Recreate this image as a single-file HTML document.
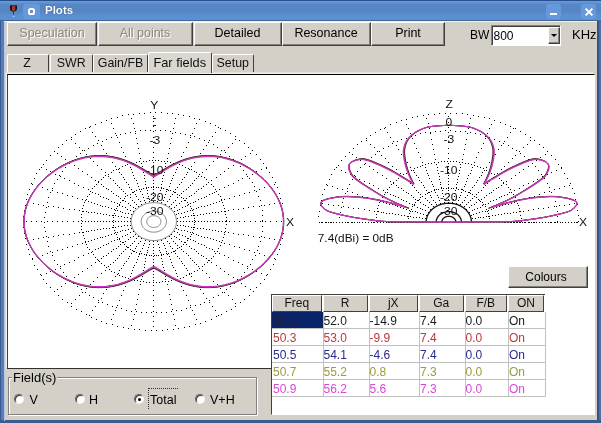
<!DOCTYPE html>
<html><head><meta charset="utf-8"><title>Plots</title>
<style>
html,body{margin:0;padding:0;}
body{width:601px;height:423px;overflow:hidden;background:#d4d0c8;font-family:"Liberation Sans",sans-serif;font-size:13px;color:#000;position:relative;will-change:transform}
.abs{position:absolute}
#frame{position:absolute;left:0;top:0;width:601px;height:423px;background:#527ec0;}
#title{position:absolute;left:0;top:0;width:601px;height:21px;background:linear-gradient(#224c8a 0,#2c5692 1px,#6a9ad8 1.2px,#6294d4 2.5px,#5686c4 4.5px,#5585c2 11px,#5a8fd0 15px,#5a91d3 19.8px,#41669a 20px,#41669a 21px);}
#client{position:absolute;left:4px;top:21px;width:593.2px;height:399.4px;background:#d4d0c8;border-top:1px solid #f4f2ec;box-sizing:border-box}
.tbtn{position:absolute;top:4px;width:15px;height:15px;border-radius:3px;background:#6698dc;}
.ttl{position:absolute;left:45px;top:2px;font-weight:bold;font-size:11.5px;color:#fff;line-height:16px;text-shadow:0 0 1px #234}
.btn{position:absolute;top:22px;height:24px;box-sizing:border-box;background:#d4d0c8;border:1px solid;border-color:#fff #404040 #404040 #fff;box-shadow:inset -1px -1px 0 #808080;text-align:center;line-height:21px;font-size:12.5px;color:#000}
.btn.dis{color:#8a8780;text-shadow:1px 1px 0 #fff}
.tab{position:absolute;top:54px;height:18px;box-sizing:border-box;border-top:1px solid #fff;border-left:1px solid #fff;border-right:1.5px solid #404040;text-align:center;font-size:12.4px;line-height:17px;color:#111;border-radius:2px 2px 0 0;background:#d4d0c8}
.tab.sel{top:52px;height:21px;line-height:19px;z-index:3;font-size:12.8px;background:#dad7d0}
#panel{position:absolute;left:6.5px;top:74.1px;width:588.7px;height:295.4px;box-shadow:-1.3px -1.5px 0 #f2f0ea;box-sizing:border-box;background:#fff;border:1px solid;border-color:#000 #fff #404040 #404040;border-top:1.5px solid #000;border-left:1.5px solid #404040;border-bottom:1.5px solid #303030}
#grid{position:absolute;left:270.6px;top:294px;width:324.4px;height:120.5px;box-sizing:border-box;background:#fff;border:1px solid;border-color:#fff #fff #fff #404040}
.th{position:absolute;box-sizing:border-box;background:#d4d0c8;border:1px solid;border-color:#fff #404040 #404040 #fff;text-align:center;font-size:12px;line-height:15px;color:#111}
.td{position:absolute;box-sizing:border-box;font-size:12px;padding-left:1px;border-right:1px solid #c0c0c0;border-bottom:1px solid #c0c0c0;box-sizing:content-box}
.lbl{position:absolute;font-size:12.5px;line-height:14px;white-space:nowrap}
.radio{position:absolute;width:10px;height:10px;border-radius:50%;box-sizing:border-box;background:#fff;border:1px solid;border-color:#606060 #f4f4f4 #f4f4f4 #606060;box-shadow:inset 1px 1px 0 #404040}
.radio.on::after{content:"";position:absolute;left:2.5px;top:2.5px;width:3.5px;height:3.5px;border-radius:50%;background:#000}
</style></head><body>
<div id="frame"></div><div class="abs" style="left:597.2px;top:21px;width:1.8px;height:402px;background:#36547f"></div><div class="abs" style="left:599px;top:21px;width:2px;height:402px;background:#4b73aa"></div><div class="abs" style="left:0;top:420.4px;width:601px;height:2.6px;background:#3b5c8e"></div><div class="abs" style="left:0;top:21px;width:1.2px;height:402px;background:#3a5a90"></div>
<div id="title"></div>
<svg class="abs" style="left:9px;top:4px" width="10" height="15" viewBox="0 0 10 15"><path d="M1,1.2 H8 V4.5 Q8,7.2 4.5,7.8 Q1,7.2 1,4.5 Z" fill="#1a1016"/><path d="M3,1.8 H6.3 V5.5 Q5.6,7 4.5,7.2 Q3.4,7 3,5.5 Z" fill="#a8382a"/><path d="M4.1,7.8 H4.9 V10.6 H4.1Z" fill="#1c2840"/><path d="M3.6,11.8 H5.4 V13.2 H3.6Z" fill="#a4c2f0"/></svg>
<div class="tbtn" style="left:23.3px;top:3.5px;width:16.5px;height:15px"></div>
<div class="abs" style="left:28px;top:7.8px;width:3px;height:3.4px;border:2px solid #fff;border-radius:2.6px;background:#6f8cba"></div>
<div class="ttl">Plots</div>
<div class="tbtn" style="left:545.5px"></div>
<div class="abs" style="left:550px;top:13.2px;width:7px;height:1.6px;background:#fff"></div>
<div class="tbtn" style="left:580.5px"></div>
<svg class="abs" style="left:583.5px;top:6.5px" width="10" height="10" viewBox="0 0 10 10"><path d="M1.6,1.6 L8.4,8.4 M8.4,1.6 L1.6,8.4" stroke="#fff" stroke-width="2" fill="none"/></svg>
<div id="client"></div><div class="abs" style="left:3.7px;top:21.5px;width:1px;height:399px;background:#b9c6dc"></div>

<div class="btn dis" style="left:7px;width:90px">Speculation</div>
<div class="btn dis" style="left:97.5px;width:95px">All points</div>
<div class="btn" style="left:193.5px;width:88px">Detailed</div>
<div class="btn" style="left:281.5px;width:89px">Resonance</div>
<div class="btn" style="left:371px;width:74px">Print</div>
<div class="lbl" style="left:470px;top:28px;font-size:12px">BW</div>
<div class="abs" style="left:491px;top:25px;width:70px;height:21px;box-sizing:border-box;background:#fff;border:1px solid;border-color:#808080 #fff #fff #808080;box-shadow:inset 1px 1px 0 #404040"></div>
<div class="lbl" style="left:493.5px;top:29px;font-size:12px">800</div>
<div class="abs" style="left:547.5px;top:27px;width:12px;height:17px;box-sizing:border-box;background:#d4d0c8;border:1px solid;border-color:#fff #404040 #404040 #fff;box-shadow:inset -1px -1px 0 #808080"></div>
<div class="abs" style="left:550.5px;top:34px;width:0;height:0;border-left:3px solid transparent;border-right:3px solid transparent;border-top:3px solid #000"></div>
<div class="lbl" style="left:572px;top:28px;font-size:13px">KHz</div>

<div class="tab" style="left:7px;width:42px;text-indent:-2px">Z</div>
<div class="tab" style="left:50px;width:42.5px">SWR</div>
<div class="tab" style="left:93px;width:55px">Gain/FB</div>
<div class="tab sel" style="left:148px;width:63.5px">Far fields</div>
<div class="tab" style="left:211.5px;width:42.5px">Setup</div>

<div id="panel"></div>
<div id="grid"></div>
<svg width="601" height="423" viewBox="0 0 601 423" style="position:absolute;left:0;top:0">
<style>.dt{fill:none;stroke:#000;stroke-width:1;shape-rendering:crispEdges}.sol{fill:none;stroke:#808080;stroke-width:1}.solb{fill:none;stroke:#111;stroke-width:1.3}.cv{fill:none}text{font-family:"Liberation Sans",sans-serif;font-size:10.8px;fill:#111}</style>
<path d="M176.44,221.6 L176.38,220.28 L176.22,218.96 L175.94,217.66 L175.56,216.38 L175.07,215.12 L174.48,213.89 L173.79,212.71 L173,211.56 L172.11,210.46 L171.14,209.42 L170.08,208.44 L168.95,207.52 L167.74,206.67 L166.46,205.89 L165.12,205.19 L163.72,204.57 L162.28,204.04 L160.79,203.58 L159.28,203.22 L157.73,202.94 L156.17,202.76 L154.59,202.67 L153.01,202.67 L151.43,202.76 L149.87,202.94 L148.32,203.22 L146.81,203.58 L145.32,204.04 L143.88,204.57 L142.48,205.19 L141.14,205.89 L139.86,206.67 L138.65,207.52 L137.52,208.44 L136.46,209.42 L135.49,210.46 L134.6,211.56 L133.81,212.71 L133.12,213.89 L132.53,215.12 L132.04,216.38 L131.66,217.66 L131.38,218.96 L131.22,220.28 L131.16,221.6 L131.22,222.92 L131.38,224.24 L131.66,225.54 L132.04,226.82 L132.53,228.08 L133.12,229.31 L133.81,230.49 L134.6,231.64 L135.49,232.74 L136.46,233.78 L137.52,234.76 L138.65,235.68 L139.86,236.53 L141.14,237.31 L142.48,238.01 L143.88,238.63 L145.32,239.16 L146.81,239.62 L148.32,239.98 L149.87,240.26 L151.43,240.44 L153.01,240.53 L154.59,240.53 L156.17,240.44 L157.73,240.26 L159.28,239.98 L160.79,239.62 L162.28,239.16 L163.72,238.63 L165.12,238.01 L166.46,237.31 L167.74,236.53 L168.95,235.68 L170.08,234.76 L171.14,233.78 L172.11,232.74 L173,231.64 L173.79,230.49 L174.48,229.31 L175.07,228.08 L175.56,226.82 L175.94,225.54 L176.22,224.24 L176.38,222.92 L176.44,221.6" class="sol"/>
<path d="M166.44,221.6 L166.41,220.86 L166.32,220.13 L166.16,219.4 L165.95,218.68 L165.68,217.98 L165.35,217.3 L164.96,216.63 L164.52,215.99 L164.03,215.38 L163.48,214.8 L162.89,214.25 L162.26,213.74 L161.58,213.26 L160.87,212.83 L160.12,212.44 L159.34,212.09 L158.53,211.79 L157.71,211.54 L156.86,211.34 L155.99,211.18 L155.12,211.08 L154.24,211.03 L153.36,211.03 L152.48,211.08 L151.61,211.18 L150.74,211.34 L149.89,211.54 L149.07,211.79 L148.26,212.09 L147.48,212.44 L146.73,212.83 L146.02,213.26 L145.34,213.74 L144.71,214.25 L144.12,214.8 L143.57,215.38 L143.08,215.99 L142.64,216.63 L142.25,217.3 L141.92,217.98 L141.65,218.68 L141.44,219.4 L141.28,220.13 L141.19,220.86 L141.16,221.6 L141.19,222.34 L141.28,223.07 L141.44,223.8 L141.65,224.52 L141.92,225.22 L142.25,225.9 L142.64,226.57 L143.08,227.21 L143.57,227.82 L144.12,228.4 L144.71,228.95 L145.34,229.46 L146.02,229.94 L146.73,230.37 L147.48,230.76 L148.26,231.11 L149.07,231.41 L149.89,231.66 L150.74,231.86 L151.61,232.02 L152.48,232.12 L153.36,232.17 L154.24,232.17 L155.12,232.12 L155.99,232.02 L156.86,231.86 L157.71,231.66 L158.53,231.41 L159.34,231.11 L160.12,230.76 L160.87,230.37 L161.58,229.94 L162.26,229.46 L162.89,228.95 L163.48,228.4 L164.03,227.82 L164.52,227.21 L164.96,226.57 L165.35,225.9 L165.68,225.22 L165.95,224.52 L166.16,223.8 L166.32,223.07 L166.41,222.34 L166.44,221.6" class="sol"/>
<path d="M160.86,221.6 L160.84,221.19 L160.79,220.78 L160.7,220.37 L160.58,219.97 L160.43,219.58 L160.25,219.2 L160.03,218.83 L159.79,218.47 L159.51,218.13 L159.21,217.8 L158.88,217.5 L158.52,217.21 L158.15,216.95 L157.75,216.7 L157.33,216.48 L156.89,216.29 L156.44,216.12 L155.98,215.98 L155.51,215.87 L155.03,215.78 L154.54,215.73 L154.05,215.7 L153.55,215.7 L153.06,215.73 L152.57,215.78 L152.09,215.87 L151.62,215.98 L151.16,216.12 L150.71,216.29 L150.27,216.48 L149.85,216.7 L149.45,216.95 L149.08,217.21 L148.72,217.5 L148.39,217.8 L148.09,218.13 L147.81,218.47 L147.57,218.83 L147.35,219.2 L147.17,219.58 L147.02,219.97 L146.9,220.37 L146.81,220.78 L146.76,221.19 L146.74,221.6 L146.76,222.01 L146.81,222.42 L146.9,222.83 L147.02,223.23 L147.17,223.62 L147.35,224 L147.57,224.37 L147.81,224.73 L148.09,225.07 L148.39,225.4 L148.72,225.7 L149.08,225.99 L149.45,226.25 L149.85,226.5 L150.27,226.72 L150.71,226.91 L151.16,227.08 L151.62,227.22 L152.09,227.33 L152.57,227.42 L153.06,227.47 L153.55,227.5 L154.05,227.5 L154.54,227.47 L155.03,227.42 L155.51,227.33 L155.98,227.22 L156.44,227.08 L156.89,226.91 L157.33,226.72 L157.75,226.5 L158.15,226.25 L158.52,225.99 L158.88,225.7 L159.21,225.4 L159.51,225.07 L159.79,224.73 L160.03,224.37 L160.25,224 L160.43,223.62 L160.58,223.23 L160.7,222.83 L160.79,222.42 L160.84,222.01 L160.86,221.6" class="sol"/>
<path d="M283,220h1M283,215h1M282,209h1M282,203h1M280,198h1M279,193h1M277,187h1M275,182h1M272,177h1M269,172h1M266,168h1M263,163h1M260,159h1M256,154h1M252,150h1M248,147h1M244,143h1M239,140h1M235,136h1M230,133h1M225,130h1M220,128h1M215,125h1M210,123h1M205,121h1M199,119h1M194,118h1M189,116h1M183,115h1M178,114h1M172,113h1M167,113h1M161,112h1M155,112h1M150,112h1M144,113h1M139,113h1M133,114h1M128,114h1M122,115h1M117,117h1M111,118h1M106,120h1M101,122h1M95,124h1M90,126h1M85,128h1M80,131h1M75,134h1M71,137h1M66,140h1M62,144h1M58,147h1M54,151h1M50,155h1M46,160h1M43,164h1M39,169h1M36,173h1M34,178h1M31,183h1M29,189h1M27,194h1M26,199h1M25,205h1M24,210h1M23,216h1M23,221h1M23,227h1M24,233h1M25,238h1M26,244h1M28,249h1M29,254h1M32,259h1M34,265h1M37,269h1M40,274h1M43,279h1M46,283h1M50,287h1M54,291h1M58,295h1M62,299h1M67,302h1M71,306h1M76,309h1M81,311h1M86,314h1M91,317h1M96,319h1M101,321h1M106,323h1M112,324h1M117,326h1M123,327h1M128,328h1M134,329h1M139,329h1M145,330h1M151,330h1M156,330h1M162,330h1M167,329h1M173,329h1M178,328h1M184,327h1M189,326h1M195,324h1M200,323h1M205,321h1M211,319h1M216,316h1M221,314h1M226,311h1M231,309h1M235,306h1M240,302h1M244,299h1M249,295h1M253,291h1M256,287h1M260,283h1M264,279h1M267,274h1M270,269h1M273,264h1M275,259h1M277,254h1M279,249h1M280,244h1M282,238h1M283,233h1M283,227h1M283,221h1M262,220h1M262,215h1M262,210h1M261,205h1M260,200h1M258,196h1M256,191h1M254,186h1M252,182h1M249,178h1M246,174h1M243,170h1M240,166h1M237,162h1M233,159h1M229,156h1M225,152h1M221,150h1M217,147h1M213,144h1M208,142h1M204,140h1M199,138h1M194,136h1M190,135h1M185,134h1M180,133h1M175,132h1M170,131h1M165,130h1M160,130h1M155,130h1M150,130h1M145,130h1M140,130h1M135,131h1M130,132h1M125,133h1M120,134h1M116,135h1M111,137h1M106,139h1M102,141h1M97,143h1M93,145h1M88,148h1M84,150h1M80,153h1M76,156h1M72,160h1M69,163h1M65,167h1M62,171h1M59,175h1M57,179h1M54,183h1M52,188h1M50,192h1M48,197h1M47,202h1M46,207h1M45,212h1M44,217h1M44,222h1M44,227h1M45,231h1M46,236h1M47,241h1M48,246h1M50,251h1M52,255h1M54,260h1M57,264h1M60,268h1M63,272h1M66,276h1M69,280h1M73,283h1M77,286h1M81,289h1M85,292h1M89,295h1M93,297h1M98,300h1M102,302h1M107,304h1M112,306h1M116,307h1M121,308h1M126,310h1M131,311h1M136,311h1M141,312h1M146,312h1M151,312h1M156,312h1M161,312h1M166,312h1M171,311h1M176,310h1M181,310h1M186,308h1M190,307h1M195,305h1M200,304h1M204,302h1M209,300h1M213,297h1M218,295h1M222,292h1M226,289h1M230,286h1M234,283h1M237,279h1M241,276h1M244,272h1M247,268h1M250,264h1M252,259h1M255,255h1M257,250h1M258,246h1M260,241h1M261,236h1M262,231h1M262,226h1M262,221h1M226,220h1M226,217h1M225,214h1M225,211h1M224,208h1M223,205h1M222,202h1M221,199h1M220,196h1M218,194h1M216,191h1M215,189h1M213,186h1M211,184h1M208,182h1M206,179h1M204,177h1M201,176h1M199,174h1M196,172h1M194,171h1M191,169h1M188,168h1M185,167h1M182,165h1M179,164h1M176,163h1M173,163h1M170,162h1M167,161h1M164,161h1M161,161h1M158,160h1M155,160h1M152,160h1M149,160h1M146,161h1M143,161h1M139,161h1M136,162h1M133,163h1M130,163h1M127,164h1M125,165h1M122,166h1M119,168h1M116,169h1M113,170h1M111,172h1M108,174h1M105,175h1M103,177h1M101,179h1M98,181h1M96,184h1M94,186h1M92,188h1M90,191h1M89,194h1M87,196h1M86,199h1M84,202h1M83,205h1M82,208h1M82,211h1M81,214h1M81,217h1M81,220h1M81,223h1M81,226h1M81,229h1M82,232h1M83,235h1M84,238h1M85,241h1M86,244h1M87,247h1M89,249h1M91,252h1M93,254h1M95,257h1M97,259h1M99,261h1M101,263h1M104,265h1M106,267h1M109,269h1M111,271h1M114,272h1M117,274h1M119,275h1M122,276h1M125,277h1M128,278h1M131,279h1M134,280h1M137,280h1M140,281h1M143,281h1M146,282h1M149,282h1M153,282h1M156,282h1M159,282h1M162,281h1M165,281h1M168,281h1M171,280h1M174,279h1M177,279h1M180,278h1M183,277h1M186,275h1M189,274h1M191,273h1M194,271h1M197,270h1M199,268h1M202,266h1M204,264h1M207,262h1M209,260h1M211,258h1M213,256h1M215,253h1M217,251h1M218,248h1M220,245h1M221,242h1M222,240h1M223,237h1M224,234h1M225,231h1M225,228h1M226,224h1M226,221h1M194,220h1M194,218h1M193,215h1M193,213h1M192,210h1M191,208h1M190,206h1M188,204h1M187,202h1M185,200h1M183,198h1M181,197h1M179,195h1M177,194h1M175,192h1M173,191h1M170,190h1M168,190h1M166,189h1M163,188h1M161,188h1M158,187h1M156,187h1M153,187h1M151,187h1M148,187h1M146,188h1M143,188h1M141,189h1M139,189h1M136,190h1M134,191h1M132,192h1M130,194h1M127,195h1M125,196h1M124,198h1M122,200h1M120,202h1M119,204h1M117,206h1M116,208h1M115,210h1M114,213h1M113,215h1M113,217h1M113,220h1M113,222h1M113,225h1M113,227h1M114,230h1M115,232h1M116,234h1M117,237h1M119,239h1M120,241h1M122,242h1M124,244h1M126,246h1M128,247h1M130,249h1M132,250h1M134,251h1M136,252h1M139,253h1M141,253h1M144,254h1M146,254h1M149,255h1M151,255h1M154,255h1M156,255h1M158,255h1M161,254h1M163,254h1M166,253h1M168,253h1M171,252h1M173,251h1M175,250h1M177,248h1M179,247h1M181,246h1M183,244h1M185,242h1M187,240h1M188,238h1M190,236h1M191,234h1M192,232h1M193,229h1M193,227h1M194,224h1M194,222h1M177,221h1M180,221h1M183,221h1M186,221h1M189,221h1M192,221h1M195,221h1M198,221h1M201,221h1M204,221h1M207,221h1M210,221h1M213,221h1M216,221h1M219,221h1M222,221h1M225,221h1M229,221h1M234,221h1M239,221h1M244,221h1M250,221h1M255,221h1M260,221h1M265,221h1M270,221h1M276,221h1M281,221h1M177,218h1M180,217h1M183,217h1M185,216h1M188,216h1M191,215h1M194,215h1M197,215h1M200,214h1M203,214h1M206,213h1M209,213h1M212,212h1M215,212h1M218,212h1M221,211h1M224,211h1M228,210h1M233,209h1M238,209h1M243,208h1M248,207h1M253,206h1M259,206h1M264,205h1M269,204h1M274,203h1M279,203h1M176,214h1M178,213h1M181,213h1M184,212h1M187,211h1M190,210h1M193,209h1M196,208h1M198,207h1M201,206h1M204,206h1M207,205h1M210,204h1M213,203h1M216,202h1M219,201h1M221,200h1M224,199h1M229,198h1M234,196h1M239,195h1M244,193h1M249,192h1M254,190h1M259,189h1M264,187h1M269,186h1M274,184h1M174,211h1M177,210h1M179,209h1M182,207h1M185,206h1M187,205h1M190,203h1M193,202h1M195,201h1M198,199h1M201,198h1M204,197h1M206,196h1M209,194h1M212,193h1M214,192h1M219,189h1M224,187h1M228,185h1M233,183h1M238,180h1M242,178h1M247,176h1M252,174h1M256,171h1M261,169h1M266,167h1M171,208h1M174,207h1M176,205h1M179,203h1M181,201h1M184,200h1M186,198h1M189,196h1M191,195h1M194,193h1M196,191h1M198,189h1M201,188h1M203,186h1M206,184h1M211,180h1M216,177h1M220,174h1M224,171h1M228,168h1M233,165h1M241,159h1M245,156h1M250,153h1M169,206h1M171,204h1M173,202h1M175,200h1M177,197h1M181,193h1M183,191h1M186,189h1M188,187h1M190,185h1M192,183h1M194,180h1M196,178h1M198,176h1M202,172h1M206,169h1M209,165h1M213,161h1M217,158h1M220,154h1M224,150h1M228,147h1M232,143h1M235,139h1M165,204h1M167,201h1M169,199h1M170,196h1M172,194h1M174,192h1M175,189h1M177,187h1M179,184h1M181,182h1M182,179h1M184,177h1M186,174h1M187,172h1M189,169h1M191,166h1M194,162h1M197,157h1M200,153h1M203,149h1M206,145h1M209,140h1M212,136h1M215,132h1M218,127h1M161,202h1M163,200h1M164,197h1M165,194h1M166,191h1M167,189h1M169,186h1M170,183h1M171,180h1M172,178h1M173,175h1M175,172h1M176,169h1M177,167h1M179,161h1M181,156h1M183,152h1M186,147h1M188,142h1M190,137h1M192,133h1M194,128h1M196,123h1M157,201h1M158,199h1M159,196h1M159,193h1M160,190h1M161,187h1M161,184h1M162,181h1M162,178h1M163,175h1M164,172h1M164,169h1M165,166h1M165,163h1M167,158h1M168,153h1M169,148h1M170,143h1M171,138h1M172,133h1M173,128h1M174,123h1M175,118h1M153,201h1M153,198h1M153,195h1M153,192h1M153,189h1M153,186h1M153,183h1M153,180h1M153,177h1M153,174h1M153,171h1M153,168h1M153,165h1M153,162h1M153,157h1M153,152h1M153,147h1M153,142h1M153,137h1M153,131h1M153,126h1M153,121h1M153,116h1M149,201h1M149,199h1M148,196h1M147,193h1M147,190h1M146,187h1M145,184h1M145,181h1M144,178h1M144,175h1M143,172h1M142,169h1M142,166h1M141,163h1M140,158h1M139,153h1M138,148h1M137,143h1M136,138h1M135,133h1M134,128h1M133,123h1M131,118h1M145,202h1M144,200h1M143,197h1M142,194h1M140,191h1M138,186h1M137,183h1M136,180h1M134,178h1M133,175h1M132,172h1M131,169h1M130,167h1M127,161h1M125,156h1M123,152h1M121,147h1M119,142h1M117,137h1M115,133h1M113,128h1M111,123h1M141,204h1M140,201h1M138,199h1M136,196h1M135,194h1M133,192h1M131,189h1M129,187h1M128,184h1M126,182h1M124,179h1M123,177h1M121,174h1M119,172h1M118,169h1M115,166h1M112,162h1M109,157h1M106,153h1M103,149h1M101,145h1M98,140h1M95,136h1M92,132h1M89,127h1M138,206h1M136,204h1M134,202h1M132,200h1M130,197h1M125,193h1M123,191h1M121,189h1M119,187h1M117,185h1M115,183h1M113,180h1M110,178h1M108,176h1M105,172h1M101,169h1M97,165h1M93,161h1M90,158h1M86,154h1M82,150h1M79,147h1M75,143h1M71,139h1M135,208h1M133,207h1M130,205h1M128,203h1M125,201h1M123,200h1M120,198h1M118,196h1M116,195h1M113,193h1M111,191h1M108,189h1M106,188h1M103,186h1M101,184h1M98,182h1M95,180h1M91,177h1M87,174h1M82,171h1M78,168h1M74,165h1M70,162h1M65,159h1M61,156h1M57,153h1M133,211h1M130,210h1M127,209h1M125,207h1M122,206h1M119,205h1M117,203h1M114,202h1M111,201h1M108,199h1M106,198h1M103,197h1M100,196h1M98,194h1M95,193h1M92,192h1M88,189h1M83,187h1M78,185h1M74,183h1M69,180h1M64,178h1M60,176h1M55,174h1M50,171h1M46,169h1M41,167h1M131,214h1M128,213h1M125,213h1M122,212h1M120,211h1M117,210h1M114,209h1M111,208h1M108,207h1M105,206h1M102,206h1M100,205h1M97,204h1M94,203h1M91,202h1M88,201h1M85,200h1M82,199h1M77,198h1M72,196h1M67,195h1M62,193h1M57,192h1M52,190h1M47,189h1M42,187h1M37,186h1M32,184h1M130,218h1M127,217h1M124,217h1M121,216h1M118,216h1M115,215h1M112,215h1M109,215h1M106,214h1M103,214h1M100,213h1M97,213h1M94,212h1M91,212h1M88,212h1M86,211h1M83,211h1M79,210h1M74,209h1M69,209h1M63,208h1M58,207h1M53,206h1M48,206h1M43,205h1M38,204h1M33,203h1M27,203h1M130,221h1M127,221h1M124,221h1M121,221h1M118,221h1M115,221h1M112,221h1M109,221h1M106,221h1M103,221h1M100,221h1M97,221h1M94,221h1M91,221h1M88,221h1M85,221h1M82,221h1M78,221h1M73,221h1M67,221h1M62,221h1M57,221h1M52,221h1M47,221h1M41,221h1M36,221h1M31,221h1M26,221h1M130,225h1M127,225h1M124,225h1M121,226h1M118,226h1M115,227h1M112,227h1M109,228h1M106,228h1M103,228h1M100,229h1M97,229h1M94,230h1M91,230h1M88,231h1M86,231h1M83,232h1M79,232h1M74,233h1M69,234h1M63,234h1M58,235h1M53,236h1M48,237h1M43,237h1M38,238h1M33,239h1M27,240h1M131,228h1M128,229h1M125,230h1M122,230h1M120,231h1M117,232h1M114,233h1M111,234h1M108,235h1M105,236h1M102,237h1M100,237h1M97,238h1M94,239h1M91,240h1M88,241h1M85,242h1M82,243h1M77,244h1M72,246h1M67,247h1M62,249h1M57,250h1M52,252h1M47,253h1M42,255h1M37,256h1M32,258h1M133,231h1M130,232h1M127,234h1M125,235h1M122,236h1M119,238h1M117,239h1M114,240h1M111,241h1M108,243h1M106,244h1M103,245h1M100,247h1M98,248h1M95,249h1M92,251h1M88,253h1M83,255h1M78,257h1M74,260h1M69,262h1M64,264h1M60,266h1M55,269h1M50,271h1M46,273h1M41,275h1M135,234h1M133,236h1M130,237h1M128,239h1M125,241h1M123,242h1M120,244h1M118,246h1M116,248h1M113,249h1M111,251h1M108,253h1M106,255h1M103,256h1M101,258h1M98,260h1M95,262h1M91,265h1M87,268h1M82,271h1M78,274h1M74,277h1M70,280h1M65,283h1M61,286h1M57,289h1M138,236h1M136,238h1M134,241h1M132,243h1M130,245h1M127,247h1M125,249h1M123,251h1M121,253h1M119,255h1M117,258h1M115,260h1M113,262h1M110,264h1M108,266h1M105,270h1M101,273h1M97,277h1M93,281h1M90,284h1M86,288h1M82,292h1M79,295h1M75,299h1M71,303h1M141,238h1M140,241h1M138,243h1M136,246h1M135,248h1M133,251h1M131,253h1M129,256h1M128,258h1M126,261h1M124,263h1M123,265h1M121,268h1M119,270h1M118,273h1M115,276h1M112,280h1M109,285h1M106,289h1M103,293h1M101,298h1M98,302h1M95,306h1M92,310h1M89,315h1M145,240h1M144,243h1M143,245h1M142,248h1M140,251h1M139,254h1M138,256h1M137,259h1M136,262h1M134,265h1M133,267h1M132,270h1M131,273h1M130,276h1M127,281h1M125,286h1M123,290h1M121,295h1M119,300h1M117,305h1M115,310h1M113,314h1M111,319h1M149,241h1M149,244h1M148,247h1M147,250h1M147,252h1M146,255h1M145,258h1M145,261h1M144,264h1M144,267h1M143,270h1M142,273h1M142,276h1M141,279h1M140,284h1M139,289h1M138,294h1M137,299h1M136,304h1M135,309h1M134,314h1M133,319h1M131,325h1M153,241h1M153,244h1M153,247h1M153,250h1M153,253h1M153,256h1M153,259h1M153,262h1M153,265h1M153,268h1M153,271h1M153,274h1M153,277h1M153,280h1M153,285h1M153,290h1M153,295h1M153,300h1M153,306h1M153,311h1M153,316h1M153,321h1M153,326h1M157,241h1M158,244h1M159,247h1M159,250h1M160,252h1M161,255h1M161,258h1M162,261h1M162,264h1M163,267h1M164,270h1M164,273h1M165,276h1M165,279h1M167,284h1M168,289h1M169,294h1M170,299h1M171,304h1M172,309h1M173,314h1M174,319h1M175,325h1M161,240h1M163,243h1M164,245h1M165,248h1M166,251h1M167,254h1M169,256h1M170,259h1M171,262h1M172,265h1M173,267h1M175,270h1M176,273h1M177,276h1M179,281h1M181,286h1M183,290h1M186,295h1M188,300h1M190,305h1M192,310h1M194,314h1M196,319h1M165,238h1M167,241h1M169,243h1M170,246h1M172,248h1M174,251h1M175,253h1M177,256h1M179,258h1M181,261h1M182,263h1M184,265h1M186,268h1M187,270h1M189,273h1M191,276h1M194,280h1M197,285h1M200,289h1M203,293h1M206,298h1M209,302h1M212,306h1M215,310h1M218,315h1M169,236h1M171,238h1M173,241h1M175,243h1M177,245h1M181,249h1M183,251h1M186,253h1M188,255h1M190,258h1M192,260h1M194,262h1M196,264h1M198,266h1M202,270h1M206,273h1M209,277h1M213,281h1M217,284h1M220,288h1M224,292h1M228,295h1M232,299h1M235,303h1M171,234h1M174,236h1M176,237h1M179,239h1M181,241h1M184,242h1M186,244h1M189,246h1M191,248h1M194,249h1M196,251h1M198,253h1M201,255h1M203,256h1M206,258h1M208,260h1M211,262h1M216,265h1M220,268h1M224,271h1M228,274h1M233,277h1M237,280h1M241,283h1M245,286h1M250,289h1M174,231h1M177,232h1M179,234h1M182,235h1M185,236h1M187,238h1M190,239h1M193,240h1M195,241h1M198,243h1M201,244h1M204,245h1M206,247h1M209,248h1M212,249h1M214,251h1M219,253h1M224,255h1M228,257h1M233,260h1M238,262h1M242,264h1M247,266h1M252,269h1M256,271h1M261,273h1M266,275h1M176,228h1M178,229h1M181,230h1M184,230h1M187,231h1M190,232h1M193,233h1M196,234h1M198,235h1M201,236h1M204,237h1M207,237h1M210,238h1M213,239h1M216,240h1M219,241h1M224,243h1M229,244h1M234,246h1M239,247h1M244,249h1M249,250h1M254,252h1M259,253h1M264,255h1M269,256h1M274,258h1M177,225h1M180,225h1M183,225h1M185,226h1M188,226h1M191,227h1M194,227h1M197,228h1M200,228h1M203,228h1M206,229h1M209,229h1M212,230h1M215,230h1M218,231h1M221,231h1M224,232h1M228,232h1M233,233h1M238,234h1M243,234h1M248,235h1M253,236h1M259,237h1M264,237h1M269,238h1M274,239h1M279,240h1" transform="translate(0,0.5)" class="dt"/>
<path d="M471.44,222.2 L471.42,221.54 L471.38,220.88 L471.31,220.22 L471.22,219.56 L471.09,218.91 L470.94,218.26 L470.76,217.62 L470.56,216.98 L470.33,216.35 L470.07,215.72 L469.79,215.1 L469.48,214.49 L469.14,213.9 L468.79,213.31 L468.4,212.73 L468,212.16 L467.57,211.61 L467.11,211.06 L466.64,210.54 L466.14,210.02 L465.62,209.52 L465.08,209.04 L464.52,208.57 L463.95,208.12 L463.35,207.69 L462.74,207.27 L462.1,206.87 L461.46,206.49 L460.8,206.13 L460.12,205.79 L459.43,205.47 L458.72,205.17 L458.01,204.89 L457.28,204.64 L456.54,204.4 L455.79,204.18 L455.04,203.99 L454.28,203.82 L453.51,203.67 L452.73,203.54 L451.95,203.44 L451.17,203.36 L450.38,203.3 L449.59,203.27 L448.8,203.26 L448.01,203.27 L447.22,203.3 L446.43,203.36 L445.65,203.44 L444.87,203.54 L444.09,203.67 L443.32,203.82 L442.56,203.99 L441.81,204.18 L441.06,204.4 L440.32,204.64 L439.59,204.89 L438.88,205.17 L438.17,205.47 L437.48,205.79 L436.8,206.13 L436.14,206.49 L435.5,206.87 L434.86,207.27 L434.25,207.69 L433.65,208.12 L433.08,208.57 L432.52,209.04 L431.98,209.52 L431.46,210.02 L430.96,210.54 L430.49,211.06 L430.03,211.61 L429.6,212.16 L429.2,212.73 L428.81,213.31 L428.46,213.9 L428.12,214.49 L427.81,215.1 L427.53,215.72 L427.27,216.35 L427.04,216.98 L426.84,217.62 L426.66,218.26 L426.51,218.91 L426.38,219.56 L426.29,220.22 L426.22,220.88 L426.18,221.54 L426.16,222.2" class="solb"/>
<path d="M461.44,222.2 L461.43,221.83 L461.41,221.46 L461.37,221.09 L461.32,220.73 L461.25,220.36 L461.16,220 L461.06,219.64 L460.95,219.28 L460.82,218.93 L460.68,218.58 L460.52,218.24 L460.35,217.9 L460.16,217.56 L459.96,217.23 L459.75,216.91 L459.52,216.59 L459.28,216.28 L459.03,215.98 L458.76,215.69 L458.48,215.4 L458.19,215.12 L457.89,214.85 L457.58,214.59 L457.26,214.34 L456.92,214.1 L456.58,213.86 L456.23,213.64 L455.87,213.43 L455.5,213.23 L455.12,213.04 L454.73,212.86 L454.34,212.69 L453.94,212.54 L453.53,212.39 L453.12,212.26 L452.71,212.14 L452.28,212.03 L451.86,211.94 L451.43,211.85 L450.99,211.78 L450.56,211.72 L450.12,211.68 L449.68,211.65 L449.24,211.63 L448.8,211.62 L448.36,211.63 L447.92,211.65 L447.48,211.68 L447.04,211.72 L446.61,211.78 L446.17,211.85 L445.74,211.94 L445.32,212.03 L444.89,212.14 L444.48,212.26 L444.07,212.39 L443.66,212.54 L443.26,212.69 L442.87,212.86 L442.48,213.04 L442.1,213.23 L441.73,213.43 L441.37,213.64 L441.02,213.86 L440.68,214.1 L440.34,214.34 L440.02,214.59 L439.71,214.85 L439.41,215.12 L439.12,215.4 L438.84,215.69 L438.57,215.98 L438.32,216.28 L438.08,216.59 L437.85,216.91 L437.64,217.23 L437.44,217.56 L437.25,217.9 L437.08,218.24 L436.92,218.58 L436.78,218.93 L436.65,219.28 L436.54,219.64 L436.44,220 L436.35,220.36 L436.28,220.73 L436.23,221.09 L436.19,221.46 L436.17,221.83 L436.16,222.2" class="solb"/>
<path d="M455.86,222.2 L455.85,221.99 L455.84,221.79 L455.82,221.58 L455.79,221.38 L455.75,221.17 L455.7,220.97 L455.65,220.77 L455.58,220.57 L455.51,220.37 L455.43,220.18 L455.34,219.99 L455.25,219.8 L455.14,219.61 L455.03,219.43 L454.91,219.25 L454.79,219.07 L454.65,218.9 L454.51,218.73 L454.36,218.56 L454.21,218.4 L454.05,218.25 L453.88,218.1 L453.7,217.95 L453.52,217.81 L453.34,217.67 L453.15,217.55 L452.95,217.42 L452.75,217.3 L452.54,217.19 L452.33,217.08 L452.11,216.98 L451.89,216.89 L451.67,216.8 L451.44,216.72 L451.21,216.65 L450.98,216.58 L450.75,216.52 L450.51,216.47 L450.27,216.42 L450.03,216.38 L449.78,216.35 L449.54,216.33 L449.29,216.31 L449.05,216.3 L448.8,216.29 L448.55,216.3 L448.31,216.31 L448.06,216.33 L447.82,216.35 L447.57,216.38 L447.33,216.42 L447.09,216.47 L446.85,216.52 L446.62,216.58 L446.39,216.65 L446.16,216.72 L445.93,216.8 L445.71,216.89 L445.49,216.98 L445.27,217.08 L445.06,217.19 L444.85,217.3 L444.65,217.42 L444.45,217.55 L444.26,217.67 L444.08,217.81 L443.9,217.95 L443.72,218.1 L443.55,218.25 L443.39,218.4 L443.24,218.56 L443.09,218.73 L442.95,218.9 L442.81,219.07 L442.69,219.25 L442.57,219.43 L442.46,219.61 L442.35,219.8 L442.26,219.99 L442.17,220.18 L442.09,220.37 L442.02,220.57 L441.95,220.77 L441.9,220.97 L441.85,221.17 L441.81,221.38 L441.78,221.58 L441.76,221.79 L441.75,221.99 L441.74,222.2" class="solb"/>
<path d="M578,221h1M578,215h1M577,210h1M577,204h1M575,199h1M574,193h1M572,188h1M570,183h1M567,178h1M564,173h1M561,168h1M558,164h1M555,159h1M551,155h1M547,151h1M543,147h1M539,144h1M534,140h1M530,137h1M525,134h1M520,131h1M515,128h1M510,126h1M505,124h1M500,122h1M494,120h1M489,118h1M484,117h1M478,116h1M473,115h1M467,114h1M462,113h1M456,113h1M450,113h1M445,113h1M439,113h1M434,114h1M428,114h1M423,115h1M417,116h1M412,117h1M406,119h1M401,120h1M396,122h1M390,124h1M385,127h1M380,129h1M375,132h1M370,135h1M366,138h1M361,141h1M357,144h1M353,148h1M349,152h1M345,156h1M341,160h1M338,165h1M334,169h1M331,174h1M329,179h1M326,184h1M324,189h1M322,194h1M321,200h1M320,205h1M319,211h1M318,216h1M557,221h1M557,216h1M557,211h1M556,206h1M555,201h1M553,196h1M551,192h1M549,187h1M547,183h1M544,178h1M541,174h1M538,170h1M535,166h1M532,163h1M528,159h1M524,156h1M520,153h1M516,150h1M512,148h1M508,145h1M503,143h1M499,141h1M494,139h1M489,137h1M485,136h1M480,134h1M475,133h1M470,132h1M465,131h1M460,131h1M455,131h1M450,130h1M445,130h1M440,131h1M435,131h1M430,132h1M425,132h1M420,133h1M415,135h1M411,136h1M406,138h1M401,139h1M397,141h1M392,143h1M388,146h1M383,148h1M379,151h1M375,154h1M371,157h1M367,160h1M364,164h1M360,167h1M357,171h1M354,175h1M352,179h1M349,184h1M347,188h1M345,193h1M343,198h1M342,202h1M341,207h1M340,212h1M339,217h1M521,221h1M521,218h1M520,215h1M520,211h1M519,208h1M518,205h1M517,203h1M516,200h1M515,197h1M513,194h1M511,192h1M510,189h1M508,187h1M506,184h1M503,182h1M501,180h1M499,178h1M496,176h1M494,174h1M491,173h1M489,171h1M486,170h1M483,168h1M480,167h1M477,166h1M474,165h1M471,164h1M468,163h1M465,163h1M462,162h1M459,162h1M456,161h1M453,161h1M450,161h1M447,161h1M444,161h1M441,161h1M438,162h1M434,162h1M431,163h1M428,163h1M425,164h1M422,165h1M420,166h1M417,167h1M414,168h1M411,170h1M408,171h1M406,173h1M403,174h1M400,176h1M398,178h1M396,180h1M393,182h1M391,184h1M389,187h1M387,189h1M385,192h1M384,194h1M382,197h1M381,200h1M379,202h1M378,205h1M377,208h1M377,211h1M376,214h1M376,217h1M376,221h1M489,221h1M489,218h1M488,216h1M488,213h1M487,211h1M486,209h1M485,206h1M483,204h1M482,202h1M480,201h1M478,199h1M476,197h1M474,196h1M472,194h1M470,193h1M468,192h1M465,191h1M463,190h1M461,189h1M458,189h1M456,188h1M453,188h1M451,188h1M448,188h1M446,188h1M443,188h1M441,188h1M438,189h1M436,189h1M434,190h1M431,191h1M429,192h1M427,193h1M425,194h1M422,196h1M420,197h1M419,199h1M417,200h1M415,202h1M414,204h1M412,206h1M411,209h1M410,211h1M409,213h1M408,216h1M408,218h1M408,221h1M472,222h1M475,222h1M478,222h1M481,222h1M484,222h1M487,222h1M490,222h1M493,222h1M496,222h1M499,222h1M502,222h1M505,222h1M508,222h1M511,222h1M514,222h1M517,222h1M520,222h1M524,222h1M529,222h1M534,222h1M539,222h1M545,222h1M550,222h1M555,222h1M560,222h1M565,222h1M571,222h1M576,222h1M472,218h1M475,218h1M478,217h1M480,217h1M483,217h1M486,216h1M489,216h1M492,215h1M495,215h1M498,214h1M501,214h1M504,213h1M507,213h1M510,213h1M513,212h1M516,212h1M519,211h1M523,211h1M528,210h1M533,209h1M538,208h1M543,208h1M548,207h1M554,206h1M559,205h1M564,205h1M569,204h1M574,203h1M471,215h1M473,214h1M476,213h1M479,212h1M482,211h1M485,211h1M488,210h1M491,209h1M493,208h1M496,207h1M499,206h1M502,205h1M505,204h1M508,204h1M511,203h1M514,202h1M516,201h1M519,200h1M524,199h1M529,197h1M534,196h1M539,194h1M544,192h1M549,191h1M554,189h1M559,188h1M564,186h1M569,185h1M469,212h1M472,210h1M474,209h1M477,208h1M480,207h1M482,205h1M485,204h1M488,203h1M490,201h1M493,200h1M496,199h1M499,197h1M501,196h1M504,195h1M507,194h1M509,192h1M514,190h1M519,188h1M523,185h1M528,183h1M533,181h1M537,179h1M542,176h1M547,174h1M551,172h1M556,170h1M561,167h1M466,209h1M469,207h1M471,205h1M474,204h1M476,202h1M479,200h1M481,199h1M484,197h1M486,195h1M489,193h1M491,192h1M493,190h1M496,188h1M498,187h1M501,185h1M503,183h1M506,181h1M511,178h1M515,175h1M519,172h1M523,169h1M528,166h1M536,160h1M540,157h1M545,154h1M464,206h1M466,204h1M468,202h1M470,200h1M472,198h1M476,194h1M478,192h1M481,190h1M483,187h1M485,185h1M487,183h1M489,181h1M491,179h1M493,177h1M497,173h1M501,169h1M504,166h1M508,162h1M512,158h1M515,155h1M519,151h1M523,147h1M527,144h1M530,140h1M460,204h1M462,202h1M464,200h1M465,197h1M467,195h1M469,192h1M470,190h1M472,187h1M474,185h1M476,182h1M477,180h1M479,177h1M481,175h1M482,172h1M484,170h1M486,167h1M489,162h1M492,158h1M495,154h1M498,149h1M501,145h1M504,141h1M507,137h1M510,132h1M513,128h1M456,203h1M458,200h1M459,197h1M460,195h1M461,192h1M462,189h1M464,186h1M465,184h1M466,181h1M467,178h1M468,175h1M470,173h1M471,170h1M472,167h1M474,162h1M476,157h1M478,152h1M481,148h1M483,143h1M485,138h1M487,133h1M489,128h1M491,124h1M452,202h1M453,199h1M454,196h1M454,193h1M455,190h1M456,187h1M456,184h1M457,182h1M457,179h1M458,176h1M459,173h1M459,170h1M460,167h1M460,164h1M462,159h1M463,154h1M464,149h1M465,144h1M466,139h1M467,133h1M468,128h1M469,123h1M470,118h1M448,202h1M448,199h1M448,196h1M448,193h1M448,190h1M448,187h1M448,184h1M448,181h1M448,178h1M448,175h1M448,172h1M448,169h1M448,166h1M448,163h1M448,158h1M448,153h1M448,148h1M448,142h1M448,137h1M448,132h1M448,127h1M448,122h1M448,116h1M444,202h1M444,199h1M443,196h1M442,193h1M442,190h1M441,187h1M440,184h1M440,182h1M439,179h1M439,176h1M438,173h1M437,170h1M437,167h1M436,164h1M435,159h1M434,154h1M433,149h1M432,144h1M431,139h1M430,133h1M429,128h1M428,123h1M426,118h1M440,203h1M439,200h1M438,197h1M437,195h1M435,192h1M434,189h1M433,186h1M432,184h1M431,181h1M429,178h1M428,175h1M427,173h1M426,170h1M425,167h1M422,162h1M420,157h1M418,152h1M416,148h1M414,143h1M412,138h1M410,133h1M408,128h1M406,124h1M436,204h1M435,202h1M433,200h1M431,197h1M430,195h1M428,192h1M426,190h1M424,187h1M423,185h1M421,182h1M419,180h1M418,177h1M416,175h1M414,172h1M413,170h1M410,167h1M407,162h1M404,158h1M401,154h1M398,149h1M396,145h1M393,141h1M390,137h1M387,132h1M384,128h1M433,206h1M431,204h1M429,202h1M427,200h1M425,198h1M420,194h1M418,192h1M416,190h1M414,187h1M412,185h1M410,183h1M408,181h1M405,179h1M403,177h1M400,173h1M396,169h1M392,166h1M388,162h1M385,158h1M381,155h1M377,151h1M374,147h1M370,144h1M366,140h1M430,209h1M428,207h1M425,205h1M423,204h1M420,202h1M418,200h1M415,199h1M413,197h1M411,195h1M408,193h1M406,192h1M403,190h1M401,188h1M398,187h1M396,185h1M393,183h1M390,181h1M386,178h1M382,175h1M377,172h1M373,169h1M369,166h1M365,163h1M360,160h1M356,157h1M352,154h1M428,212h1M425,210h1M422,209h1M420,208h1M417,207h1M414,205h1M412,204h1M409,203h1M406,201h1M403,200h1M401,199h1M398,197h1M395,196h1M393,195h1M390,194h1M387,192h1M383,190h1M378,188h1M373,185h1M369,183h1M364,181h1M359,179h1M355,176h1M350,174h1M345,172h1M341,170h1M336,167h1M426,215h1M423,214h1M420,213h1M417,212h1M415,211h1M412,211h1M409,210h1M406,209h1M403,208h1M400,207h1M397,206h1M395,205h1M392,204h1M389,204h1M386,203h1M383,202h1M380,201h1M377,200h1M372,199h1M367,197h1M362,196h1M357,194h1M352,192h1M347,191h1M342,189h1M337,188h1M332,186h1M327,185h1M425,218h1M422,218h1M419,217h1M416,217h1M413,217h1M410,216h1M407,216h1M404,215h1M401,215h1M398,214h1M395,214h1M392,213h1M389,213h1M386,213h1M383,212h1M381,212h1M378,211h1M374,211h1M369,210h1M364,209h1M358,208h1M353,208h1M348,207h1M343,206h1M338,205h1M333,205h1M328,204h1M322,203h1M425,222h1M422,222h1M419,222h1M416,222h1M413,222h1M410,222h1M407,222h1M404,222h1M401,222h1M398,222h1M395,222h1M392,222h1M389,222h1M386,222h1M383,222h1M380,222h1M377,222h1M373,222h1M368,222h1M362,222h1M357,222h1M352,222h1M347,222h1M342,222h1M336,222h1M331,222h1M326,222h1M321,222h1M319,222h1M322,222h1M325,222h1M328,222h1M330,222h1M333,222h1M339,222h1M345,222h1M348,222h1M351,222h1M354,222h1M359,222h1M365,222h1M371,222h1M374,222h1M388,222h1M391,222h1M394,222h1M397,222h1M400,222h1M403,222h1M406,222h1M409,222h1M412,222h1M415,222h1M417,222h1M420,222h1M423,222h1M426,222h1M429,222h1M432,222h1M435,222h1M438,222h1M441,222h1M444,222h1M446,222h1M449,222h1M452,222h1M455,222h1M458,222h1M461,222h1M464,222h1M467,222h1M470,222h1M473,222h1M504,222h1M507,222h1M510,222h1M513,222h1M516,222h1M519,222h1M522,222h1M525,222h1M528,222h1M531,222h1M533,222h1M536,222h1M542,222h1M548,222h1M551,222h1M554,222h1M557,222h1M562,222h1M568,222h1M574,222h1M577,222h1" transform="translate(0,0.5)" class="dt"/>
<path d="M283.49,221.6 L283.34,217.77 L282.89,213.96 L282.15,210.19 L281.12,206.46 L279.82,202.8 L278.26,199.22 L276.45,195.72 L274.41,192.34 L272.17,189.06 L269.73,185.9 L267.11,182.86 L264.34,179.96 L261.42,177.19 L258.36,174.56 L255.19,172.07 L251.91,169.73 L248.52,167.54 L245.04,165.51 L241.47,163.64 L237.81,161.95 L234.08,160.43 L230.28,159.11 L226.41,157.98 L222.49,157.05 L218.52,156.34 L214.51,155.85 L210.49,155.58 L206.46,155.54 L202.44,155.73 L198.46,156.15 L194.53,156.78 L190.69,157.61 L186.94,158.62 L183.31,159.8 L179.81,161.12 L176.47,162.55 L173.3,164.06 L170.3,165.61 L167.47,167.18 L164.82,168.72 L162.34,170.21 L160.01,171.61 L157.83,172.88 L155.76,173.99 L153.8,174.91 L151.84,173.99 L149.77,172.88 L147.59,171.61 L145.26,170.21 L142.78,168.72 L140.13,167.18 L137.3,165.61 L134.3,164.06 L131.13,162.55 L127.79,161.12 L124.29,159.8 L120.66,158.62 L116.91,157.61 L113.07,156.78 L109.14,156.15 L105.16,155.73 L101.14,155.54 L97.11,155.58 L93.09,155.85 L89.08,156.34 L85.11,157.05 L81.19,157.98 L77.32,159.11 L73.52,160.43 L69.79,161.95 L66.13,163.64 L62.56,165.51 L59.08,167.54 L55.69,169.73 L52.41,172.07 L49.24,174.56 L46.18,177.19 L43.26,179.96 L40.49,182.86 L37.87,185.9 L35.43,189.06 L33.19,192.34 L31.15,195.72 L29.34,199.22 L27.78,202.8 L26.48,206.46 L25.45,210.19 L24.71,213.96 L24.26,217.77 L24.11,221.6 L24.26,225.43 L24.71,229.24 L25.45,233.01 L26.48,236.74 L27.78,240.4 L29.34,243.98 L31.15,247.48 L33.19,250.86 L35.43,254.14 L37.87,257.3 L40.49,260.34 L43.26,263.24 L46.18,266.01 L49.24,268.64 L52.41,271.13 L55.69,273.47 L59.08,275.66 L62.56,277.69 L66.13,279.56 L69.79,281.25 L73.52,282.77 L77.32,284.09 L81.19,285.22 L85.11,286.15 L89.08,286.86 L93.09,287.35 L97.11,287.62 L101.14,287.66 L105.16,287.47 L109.14,287.05 L113.07,286.42 L116.91,285.59 L120.66,284.58 L124.29,283.4 L127.79,282.08 L131.13,280.65 L134.3,279.14 L137.3,277.59 L140.13,276.02 L142.78,274.48 L145.26,272.99 L147.59,271.59 L149.77,270.32 L151.84,269.21 L153.8,268.29 L155.76,269.21 L157.83,270.32 L160.01,271.59 L162.34,272.99 L164.82,274.48 L167.47,276.02 L170.3,277.59 L173.3,279.14 L176.47,280.65 L179.81,282.08 L183.31,283.4 L186.94,284.58 L190.69,285.59 L194.53,286.42 L198.46,287.05 L202.44,287.47 L206.46,287.66 L210.49,287.62 L214.51,287.35 L218.52,286.86 L222.49,286.15 L226.41,285.22 L230.28,284.09 L234.08,282.77 L237.81,281.25 L241.47,279.56 L245.04,277.69 L248.52,275.66 L251.91,273.47 L255.19,271.13 L258.36,268.64 L261.42,266.01 L264.34,263.24 L267.11,260.34 L269.73,257.3 L272.17,254.14 L274.41,250.86 L276.45,247.48 L278.26,243.98 L279.82,240.4 L281.12,236.74 L282.15,233.01 L282.89,229.24 L283.34,225.43 L283.49,221.6Z" class="cv" stroke="#000000" stroke-width="0.8"/>
<path d="M448.8,222.2 L507.89,221.76 L517.01,221.19 L521.76,220.58 L526.55,219.9 L532.85,219.09 L538.86,218.21 L544.49,217.25 L549.64,216.23 L554.62,215.15 L559.66,213.99 L564.31,212.79 L568.15,211.59 L570.75,210.44 L572.24,209.38 L573.55,208.3 L574.69,207.23 L575.62,206.16 L576.3,205.11 L576.71,204.09 L576.8,203.1 L576.53,202.17 L575.8,201.31 L574.67,200.53 L573.19,199.83 L571.42,199.2 L569.42,198.64 L567.25,198.14 L564.96,197.69 L562.61,197.29 L560.26,196.93 L557.85,196.61 L555.09,196.41 L551.99,196.33 L548.62,196.38 L545.01,196.53 L541.23,196.79 L537.32,197.14 L533.31,197.58 L529.12,198.13 L524.57,198.86 L519.49,199.84 L513.71,201.12 L506.6,202.94 L497.75,205.47 L488.61,208.25 L495.48,205.43 L501.65,202.75 L506.74,200.37 L510.95,198.23 L514.63,196.23 L517.96,194.29 L521.14,192.35 L524.33,190.33 L527.78,188.15 L531.44,185.8 L535.08,183.38 L538.49,180.99 L541.45,178.74 L543.75,176.75 L545.17,175.12 L545.98,173.76 L546.69,172.43 L547.31,171.12 L547.81,169.85 L548.18,168.63 L548.41,167.46 L548.49,166.37 L548.41,165.35 L548.16,164.42 L547.72,163.59 L547.1,162.87 L546.38,162.21 L545.56,161.62 L544.66,161.08 L543.68,160.6 L542.63,160.17 L541.52,159.8 L540.35,159.47 L539.14,159.19 L537.89,158.94 L536.61,158.74 L535.28,158.59 L533.63,158.69 L531.64,159.08 L529.39,159.72 L526.93,160.55 L524.33,161.55 L521.65,162.67 L518.96,163.86 L516.31,165.08 L513.76,166.27 L511.33,167.41 L508.84,168.67 L506.29,170.04 L503.72,171.48 L501.2,172.96 L498.74,174.43 L496.41,175.86 L494.24,177.19 L492.22,178.42 L490.29,179.61 L488.45,180.76 L486.7,181.88 L485.04,182.95 L483.47,183.97 L484.4,182.23 L485.37,180.39 L486.26,178.58 L487.06,176.82 L487.8,175.08 L488.48,173.34 L489.11,171.63 L489.69,169.92 L490.22,168.24 L490.68,166.57 L491.1,164.92 L491.46,163.29 L491.79,161.66 L492.09,160.01 L492.36,158.36 L492.6,156.69 L492.78,155.06 L492.9,153.47 L492.95,151.94 L492.91,150.5 L492.78,149.16 L492.56,147.93 L492.3,146.74 L491.98,145.59 L491.63,144.48 L491.23,143.41 L490.8,142.39 L490.32,141.41 L489.8,140.47 L489.24,139.59 L488.64,138.75 L488.01,137.97 L487.35,137.22 L486.67,136.49 L485.97,135.79 L485.25,135.11 L484.51,134.45 L483.75,133.83 L482.97,133.23 L482.17,132.66 L481.35,132.12 L480.51,131.62 L479.66,131.15 L478.79,130.71 L477.91,130.27 L477.03,129.85 L476.14,129.43 L475.23,129.03 L474.33,128.65 L473.41,128.28 L472.48,127.95 L471.54,127.63 L470.59,127.35 L469.63,127.11 L468.66,126.9 L467.68,126.73 L466.7,126.59 L465.71,126.46 L464.72,126.34 L463.73,126.23 L462.74,126.12 L461.75,126.02 L460.76,125.93 L459.76,125.85 L458.77,125.77 L457.78,125.7 L456.78,125.64 L455.78,125.58 L454.79,125.53 L453.79,125.49 L452.79,125.46 L451.79,125.43 L450.8,125.41 L449.8,125.4 L448.8,125.4 L447.8,125.4 L446.8,125.41 L445.81,125.43 L444.81,125.46 L443.81,125.49 L442.81,125.53 L441.82,125.58 L440.82,125.64 L439.82,125.7 L438.83,125.77 L437.84,125.85 L436.84,125.93 L435.85,126.02 L434.86,126.12 L433.87,126.23 L432.88,126.34 L431.89,126.46 L430.9,126.59 L429.92,126.73 L428.94,126.9 L427.97,127.11 L427.01,127.35 L426.06,127.63 L425.12,127.95 L424.19,128.28 L423.27,128.65 L422.37,129.03 L421.46,129.43 L420.57,129.85 L419.69,130.27 L418.81,130.71 L417.94,131.15 L417.09,131.62 L416.25,132.12 L415.43,132.66 L414.63,133.23 L413.85,133.83 L413.09,134.45 L412.35,135.11 L411.63,135.79 L410.93,136.49 L410.25,137.22 L409.59,137.97 L408.96,138.75 L408.36,139.59 L407.8,140.47 L407.28,141.41 L406.8,142.39 L406.37,143.41 L405.97,144.48 L405.62,145.59 L405.3,146.74 L405.04,147.93 L404.82,149.16 L404.69,150.5 L404.65,151.94 L404.7,153.47 L404.82,155.06 L405,156.69 L405.24,158.36 L405.51,160.01 L405.81,161.66 L406.14,163.29 L406.5,164.92 L406.92,166.57 L407.38,168.24 L407.91,169.92 L408.49,171.63 L409.12,173.34 L409.8,175.08 L410.54,176.82 L411.34,178.58 L412.23,180.39 L413.2,182.23 L414.13,183.97 L412.56,182.95 L410.9,181.88 L409.15,180.76 L407.31,179.61 L405.38,178.42 L403.36,177.19 L401.19,175.86 L398.86,174.43 L396.4,172.96 L393.88,171.48 L391.31,170.04 L388.76,168.67 L386.27,167.41 L383.84,166.27 L381.29,165.08 L378.64,163.86 L375.95,162.67 L373.27,161.55 L370.67,160.55 L368.21,159.72 L365.96,159.08 L363.97,158.69 L362.32,158.59 L360.99,158.74 L359.71,158.94 L358.46,159.19 L357.25,159.47 L356.08,159.8 L354.97,160.17 L353.92,160.6 L352.94,161.08 L352.04,161.62 L351.22,162.21 L350.5,162.87 L349.88,163.59 L349.44,164.42 L349.19,165.35 L349.11,166.37 L349.19,167.46 L349.42,168.63 L349.79,169.85 L350.29,171.12 L350.91,172.43 L351.62,173.76 L352.43,175.12 L353.85,176.75 L356.15,178.74 L359.11,180.99 L362.52,183.38 L366.16,185.8 L369.82,188.15 L373.27,190.33 L376.46,192.35 L379.64,194.29 L382.97,196.23 L386.65,198.23 L390.86,200.37 L395.95,202.75 L402.12,205.43 L408.99,208.25 L399.85,205.47 L391,202.94 L383.89,201.12 L378.11,199.84 L373.03,198.86 L368.48,198.13 L364.29,197.58 L360.28,197.14 L356.37,196.79 L352.59,196.53 L348.98,196.38 L345.61,196.33 L342.51,196.41 L339.75,196.61 L337.34,196.93 L334.99,197.29 L332.64,197.69 L330.35,198.14 L328.18,198.64 L326.18,199.2 L324.41,199.83 L322.93,200.53 L321.8,201.31 L321.07,202.17 L320.8,203.1 L320.89,204.09 L321.3,205.11 L321.98,206.16 L322.91,207.23 L324.05,208.3 L325.36,209.38 L326.85,210.44 L329.45,211.59 L333.29,212.79 L337.94,213.99 L342.98,215.15 L347.96,216.23 L353.11,217.25 L358.74,218.21 L364.75,219.09 L371.05,219.9 L375.84,220.58 L380.59,221.19 L389.71,221.76 L448.8,222.2" class="cv" stroke="#000000" stroke-width="0.8"/>
<path d="M283.64,221.6 L283.49,217.77 L283.04,213.95 L282.29,210.17 L281.26,206.44 L279.95,202.78 L278.38,199.19 L276.56,195.7 L274.51,192.31 L272.25,189.03 L269.8,185.88 L267.17,182.84 L264.38,179.94 L261.44,177.18 L258.37,174.55 L255.18,172.07 L251.89,169.74 L248.49,167.56 L244.99,165.54 L241.41,163.68 L237.74,162 L234,160.5 L230.18,159.18 L226.31,158.07 L222.37,157.16 L218.39,156.46 L214.38,155.99 L210.35,155.74 L206.31,155.72 L202.29,155.94 L198.31,156.37 L194.38,157.02 L190.53,157.87 L186.79,158.91 L183.16,160.11 L179.68,161.44 L176.34,162.89 L173.18,164.42 L170.19,165.99 L167.37,167.57 L164.74,169.12 L162.27,170.62 L159.96,172.02 L157.79,173.3 L155.75,174.42 L153.8,175.35 L151.85,174.42 L149.81,173.3 L147.64,172.02 L145.33,170.62 L142.86,169.12 L140.23,167.57 L137.41,165.99 L134.42,164.42 L131.26,162.89 L127.92,161.44 L124.44,160.11 L120.81,158.91 L117.07,157.87 L113.22,157.02 L109.29,156.37 L105.31,155.94 L101.29,155.72 L97.25,155.74 L93.22,155.99 L89.21,156.46 L85.23,157.16 L81.29,158.07 L77.42,159.18 L73.6,160.5 L69.86,162 L66.19,163.68 L62.61,165.54 L59.11,167.56 L55.71,169.74 L52.42,172.07 L49.23,174.55 L46.16,177.18 L43.22,179.94 L40.43,182.84 L37.8,185.88 L35.35,189.03 L33.09,192.31 L31.04,195.7 L29.22,199.19 L27.65,202.78 L26.34,206.44 L25.31,210.17 L24.56,213.95 L24.11,217.77 L23.96,221.6 L24.11,225.43 L24.56,229.25 L25.31,233.03 L26.34,236.76 L27.65,240.42 L29.22,244.01 L31.04,247.5 L33.09,250.89 L35.35,254.17 L37.8,257.32 L40.43,260.36 L43.22,263.26 L46.16,266.02 L49.23,268.65 L52.42,271.13 L55.71,273.46 L59.11,275.64 L62.61,277.66 L66.19,279.52 L69.86,281.2 L73.6,282.7 L77.42,284.02 L81.29,285.13 L85.23,286.04 L89.21,286.74 L93.22,287.21 L97.25,287.46 L101.29,287.48 L105.31,287.26 L109.29,286.83 L113.22,286.18 L117.07,285.33 L120.81,284.29 L124.44,283.09 L127.92,281.76 L131.26,280.31 L134.42,278.78 L137.41,277.21 L140.23,275.63 L142.86,274.08 L145.33,272.58 L147.64,271.18 L149.81,269.9 L151.85,268.78 L153.8,267.85 L155.75,268.78 L157.79,269.9 L159.96,271.18 L162.27,272.58 L164.74,274.08 L167.37,275.63 L170.19,277.21 L173.18,278.78 L176.34,280.31 L179.68,281.76 L183.16,283.09 L186.79,284.29 L190.53,285.33 L194.38,286.18 L198.31,286.83 L202.29,287.26 L206.31,287.48 L210.35,287.46 L214.38,287.21 L218.39,286.74 L222.37,286.04 L226.31,285.13 L230.18,284.02 L234,282.7 L237.74,281.2 L241.41,279.52 L244.99,277.66 L248.49,275.64 L251.89,273.46 L255.18,271.13 L258.37,268.65 L261.44,266.02 L264.38,263.26 L267.17,260.36 L269.8,257.32 L272.25,254.17 L274.51,250.89 L276.56,247.5 L278.38,244.01 L279.95,240.42 L281.26,236.76 L282.29,233.03 L283.04,229.25 L283.49,225.43 L283.64,221.6Z" class="cv" stroke="#b02020" stroke-width="0.8"/>
<path d="M448.8,222.2 L507.94,221.76 L517.06,221.19 L521.81,220.58 L526.65,219.9 L532.98,219.09 L539,218.2 L544.64,217.24 L549.79,216.22 L554.81,215.14 L559.86,213.98 L564.5,212.77 L568.31,211.57 L570.85,210.43 L572.32,209.37 L573.63,208.29 L574.77,207.22 L575.68,206.15 L576.35,205.11 L576.74,204.08 L576.81,203.1 L576.5,202.17 L575.73,201.32 L574.56,200.55 L573.05,199.85 L571.25,199.23 L569.23,198.67 L567.03,198.18 L564.73,197.74 L562.37,197.35 L560.01,196.99 L557.56,196.68 L554.74,196.5 L551.6,196.43 L548.17,196.49 L544.53,196.66 L540.71,196.93 L536.76,197.3 L532.72,197.75 L528.47,198.33 L523.83,199.09 L518.62,200.11 L512.68,201.45 L505.2,203.4 L496.09,206.03 L489.91,207.79 L496.73,204.99 L502.75,202.35 L507.65,200.03 L511.76,197.92 L515.38,195.93 L518.68,194 L521.87,192.05 L525.11,190.01 L528.64,187.78 L532.34,185.4 L535.97,182.98 L539.32,180.61 L542.16,178.41 L544.29,176.49 L545.5,174.96 L546.29,173.61 L546.99,172.28 L547.58,170.98 L548.06,169.72 L548.4,168.51 L548.6,167.36 L548.64,166.28 L548.52,165.29 L548.22,164.38 L547.73,163.59 L547.08,162.88 L546.33,162.24 L545.49,161.66 L544.56,161.14 L543.56,160.68 L542.49,160.26 L541.36,159.9 L540.18,159.59 L538.95,159.32 L537.69,159.09 L536.4,158.89 L534.99,158.8 L533.22,159 L531.13,159.48 L528.78,160.18 L526.26,161.08 L523.61,162.13 L520.91,163.28 L518.21,164.48 L515.58,165.69 L513.07,166.86 L510.62,168.03 L508.09,169.33 L505.52,170.74 L502.95,172.2 L500.43,173.68 L498,175.14 L495.72,176.53 L493.6,177.81 L491.61,179.03 L489.71,180.21 L487.9,181.35 L486.17,182.44 L484.54,183.49 L483.98,183.41 L485,181.55 L485.95,179.72 L486.81,177.93 L487.6,176.18 L488.33,174.43 L489,172.71 L489.62,170.99 L490.19,169.29 L490.7,167.61 L491.15,165.95 L491.56,164.3 L491.91,162.68 L492.24,161.03 L492.54,159.37 L492.8,157.72 L493.02,156.07 L493.18,154.46 L493.27,152.9 L493.28,151.42 L493.2,150.02 L493.04,148.74 L492.79,147.54 L492.51,146.37 L492.18,145.25 L491.81,144.16 L491.4,143.11 L490.95,142.1 L490.45,141.14 L489.92,140.23 L489.35,139.37 L488.74,138.55 L488.1,137.79 L487.43,137.05 L486.74,136.33 L486.04,135.63 L485.31,134.96 L484.56,134.32 L483.79,133.7 L483.01,133.12 L482.2,132.56 L481.38,132.03 L480.54,131.54 L479.68,131.08 L478.81,130.64 L477.93,130.21 L477.05,129.79 L476.15,129.37 L475.25,128.98 L474.34,128.6 L473.42,128.24 L472.49,127.91 L471.54,127.6 L470.59,127.33 L469.63,127.09 L468.66,126.89 L467.68,126.73 L466.7,126.59 L465.71,126.46 L464.72,126.34 L463.73,126.23 L462.74,126.12 L461.75,126.02 L460.76,125.93 L459.76,125.85 L458.77,125.77 L457.78,125.7 L456.78,125.64 L455.78,125.58 L454.79,125.53 L453.79,125.49 L452.79,125.46 L451.79,125.43 L450.8,125.41 L449.8,125.4 L448.8,125.4 L447.8,125.4 L446.8,125.41 L445.81,125.43 L444.81,125.46 L443.81,125.49 L442.81,125.53 L441.82,125.58 L440.82,125.64 L439.82,125.7 L438.83,125.77 L437.84,125.85 L436.84,125.93 L435.85,126.02 L434.86,126.12 L433.87,126.23 L432.88,126.34 L431.89,126.46 L430.9,126.59 L429.92,126.73 L428.94,126.89 L427.97,127.09 L427.01,127.33 L426.06,127.6 L425.11,127.91 L424.18,128.24 L423.26,128.6 L422.35,128.98 L421.45,129.37 L420.55,129.79 L419.67,130.21 L418.79,130.64 L417.92,131.08 L417.06,131.54 L416.22,132.03 L415.4,132.56 L414.59,133.12 L413.81,133.7 L413.04,134.32 L412.29,134.96 L411.56,135.63 L410.86,136.33 L410.17,137.05 L409.5,137.79 L408.86,138.55 L408.25,139.37 L407.68,140.23 L407.15,141.14 L406.65,142.1 L406.2,143.11 L405.79,144.16 L405.42,145.25 L405.09,146.37 L404.81,147.54 L404.56,148.74 L404.4,150.02 L404.32,151.42 L404.33,152.9 L404.42,154.46 L404.58,156.07 L404.8,157.72 L405.06,159.37 L405.36,161.03 L405.69,162.68 L406.04,164.3 L406.45,165.95 L406.9,167.61 L407.41,169.29 L407.98,170.99 L408.6,172.71 L409.27,174.43 L410,176.18 L410.79,177.93 L411.65,179.72 L412.6,181.55 L413.62,183.41 L413.06,183.49 L411.43,182.44 L409.7,181.35 L407.89,180.21 L405.99,179.03 L404,177.81 L401.88,176.53 L399.6,175.14 L397.17,173.68 L394.65,172.2 L392.08,170.74 L389.51,169.33 L386.98,168.03 L384.53,166.86 L382.02,165.69 L379.39,164.48 L376.69,163.28 L373.99,162.13 L371.34,161.08 L368.82,160.18 L366.47,159.48 L364.38,159 L362.61,158.8 L361.2,158.89 L359.91,159.09 L358.65,159.32 L357.42,159.59 L356.24,159.9 L355.11,160.26 L354.04,160.68 L353.04,161.14 L352.11,161.66 L351.27,162.24 L350.52,162.88 L349.87,163.59 L349.38,164.38 L349.08,165.29 L348.96,166.28 L349,167.36 L349.2,168.51 L349.54,169.72 L350.02,170.98 L350.61,172.28 L351.31,173.61 L352.1,174.96 L353.31,176.49 L355.44,178.41 L358.28,180.61 L361.63,182.98 L365.26,185.4 L368.96,187.78 L372.49,190.01 L375.73,192.05 L378.92,194 L382.22,195.93 L385.84,197.92 L389.95,200.03 L394.85,202.35 L400.87,204.99 L407.69,207.79 L401.51,206.03 L392.4,203.4 L384.92,201.45 L378.98,200.11 L373.77,199.09 L369.13,198.33 L364.88,197.75 L360.84,197.3 L356.89,196.93 L353.07,196.66 L349.43,196.49 L346,196.43 L342.86,196.5 L340.04,196.68 L337.59,196.99 L335.23,197.35 L332.87,197.74 L330.57,198.18 L328.37,198.67 L326.35,199.23 L324.55,199.85 L323.04,200.55 L321.87,201.32 L321.1,202.17 L320.79,203.1 L320.86,204.08 L321.25,205.11 L321.92,206.15 L322.83,207.22 L323.97,208.29 L325.28,209.37 L326.75,210.43 L329.29,211.57 L333.1,212.77 L337.74,213.98 L342.79,215.14 L347.81,216.22 L352.96,217.24 L358.6,218.2 L364.62,219.09 L370.95,219.9 L375.79,220.58 L380.54,221.19 L389.66,221.76 L448.8,222.2" class="cv" stroke="#b02020" stroke-width="0.8"/>
<path d="M283.8,221.6 L283.65,217.76 L283.19,213.94 L282.44,210.16 L281.4,206.43 L280.08,202.76 L278.5,199.17 L276.67,195.68 L274.61,192.29 L272.33,189.01 L269.87,185.85 L267.22,182.82 L264.42,179.93 L261.47,177.17 L258.38,174.55 L255.18,172.07 L251.87,169.75 L248.45,167.58 L244.94,165.57 L241.35,163.72 L237.67,162.05 L233.91,160.56 L230.09,159.26 L226.2,158.16 L222.26,157.27 L218.27,156.59 L214.25,156.13 L210.21,155.9 L206.17,155.9 L202.14,156.14 L198.16,156.59 L194.23,157.26 L190.38,158.13 L186.64,159.19 L183.02,160.41 L179.54,161.77 L176.21,163.23 L173.06,164.77 L170.08,166.36 L167.28,167.95 L164.65,169.52 L162.2,171.03 L159.91,172.44 L157.76,173.72 L155.73,174.84 L153.8,175.77 L151.87,174.84 L149.84,173.72 L147.69,172.44 L145.4,171.03 L142.95,169.52 L140.32,167.95 L137.52,166.36 L134.54,164.77 L131.39,163.23 L128.06,161.77 L124.58,160.41 L120.96,159.19 L117.22,158.13 L113.37,157.26 L109.44,156.59 L105.46,156.14 L101.43,155.9 L97.39,155.9 L93.35,156.13 L89.33,156.59 L85.34,157.27 L81.4,158.16 L77.51,159.26 L73.69,160.56 L69.93,162.05 L66.25,163.72 L62.66,165.57 L59.15,167.58 L55.73,169.75 L52.42,172.07 L49.22,174.55 L46.13,177.17 L43.18,179.93 L40.38,182.82 L37.73,185.85 L35.27,189.01 L32.99,192.29 L30.93,195.68 L29.1,199.17 L27.52,202.76 L26.2,206.43 L25.16,210.16 L24.41,213.94 L23.95,217.76 L23.8,221.6 L23.95,225.44 L24.41,229.26 L25.16,233.04 L26.2,236.77 L27.52,240.44 L29.1,244.03 L30.93,247.52 L32.99,250.91 L35.27,254.19 L37.73,257.35 L40.38,260.38 L43.18,263.27 L46.13,266.03 L49.22,268.65 L52.42,271.13 L55.73,273.45 L59.15,275.62 L62.66,277.63 L66.25,279.48 L69.93,281.15 L73.69,282.64 L77.51,283.94 L81.4,285.04 L85.34,285.93 L89.33,286.61 L93.35,287.07 L97.39,287.3 L101.43,287.3 L105.46,287.06 L109.44,286.61 L113.37,285.94 L117.22,285.07 L120.96,284.01 L124.58,282.79 L128.06,281.43 L131.39,279.97 L134.54,278.43 L137.52,276.84 L140.32,275.25 L142.95,273.68 L145.4,272.17 L147.69,270.76 L149.84,269.48 L151.87,268.36 L153.8,267.43 L155.73,268.36 L157.76,269.48 L159.91,270.76 L162.2,272.17 L164.65,273.68 L167.28,275.25 L170.08,276.84 L173.06,278.43 L176.21,279.97 L179.54,281.43 L183.02,282.79 L186.64,284.01 L190.38,285.07 L194.23,285.94 L198.16,286.61 L202.14,287.06 L206.17,287.3 L210.21,287.3 L214.25,287.07 L218.27,286.61 L222.26,285.93 L226.2,285.04 L230.09,283.94 L233.91,282.64 L237.67,281.15 L241.35,279.48 L244.94,277.63 L248.45,275.62 L251.87,273.45 L255.18,271.13 L258.38,268.65 L261.47,266.03 L264.42,263.27 L267.22,260.38 L269.87,257.35 L272.33,254.19 L274.61,250.91 L276.67,247.52 L278.5,244.03 L280.08,240.44 L281.4,236.77 L282.44,233.04 L283.19,229.26 L283.65,225.44 L283.8,221.6Z" class="cv" stroke="#101080" stroke-width="0.8"/>
<path d="M448.8,222.2 L507.99,221.76 L517.11,221.19 L521.86,220.58 L526.75,219.9 L533.1,219.09 L539.15,218.19 L544.79,217.23 L549.95,216.21 L555,215.13 L560.06,213.96 L564.7,212.76 L568.47,211.56 L570.95,210.42 L572.41,209.36 L573.72,208.28 L574.84,207.21 L575.75,206.15 L576.4,205.1 L576.77,204.08 L576.82,203.1 L576.47,202.18 L575.66,201.33 L574.46,200.57 L572.91,199.88 L571.08,199.26 L569.03,198.71 L566.82,198.23 L564.49,197.79 L562.12,197.4 L559.76,197.04 L557.26,196.75 L554.39,196.58 L551.19,196.54 L547.72,196.61 L544.04,196.79 L540.18,197.08 L536.21,197.45 L532.13,197.92 L527.81,198.52 L523.07,199.33 L517.74,200.39 L511.6,201.8 L503.75,203.88 L494.39,206.61 L491.21,207.33 L497.94,204.55 L503.81,201.96 L508.54,199.7 L512.56,197.61 L516.12,195.64 L519.4,193.71 L522.6,191.74 L525.91,189.67 L529.52,187.4 L533.24,185.01 L536.85,182.59 L540.12,180.25 L542.83,178.1 L544.77,176.25 L545.81,174.81 L546.59,173.46 L547.27,172.13 L547.85,170.84 L548.3,169.59 L548.61,168.4 L548.78,167.26 L548.78,166.2 L548.62,165.23 L548.27,164.35 L547.73,163.59 L547.05,162.9 L546.27,162.28 L545.41,161.71 L544.46,161.21 L543.43,160.76 L542.35,160.36 L541.2,160.01 L540,159.71 L538.76,159.45 L537.49,159.23 L536.19,159.05 L534.66,159.04 L532.77,159.34 L530.58,159.89 L528.16,160.67 L525.57,161.63 L522.88,162.71 L520.17,163.89 L517.47,165.1 L514.86,166.3 L512.39,167.44 L509.9,168.66 L507.33,170.01 L504.74,171.44 L502.17,172.92 L499.67,174.39 L497.28,175.83 L495.05,177.19 L492.98,178.43 L491.01,179.63 L489.14,180.79 L487.35,181.92 L485.65,183 L484.05,184.03 L484.59,182.74 L485.6,180.88 L486.52,179.06 L487.36,177.29 L488.13,175.54 L488.85,173.8 L489.51,172.07 L490.12,170.36 L490.68,168.67 L491.17,166.99 L491.62,165.33 L492.01,163.69 L492.36,162.06 L492.68,160.4 L492.98,158.74 L493.23,157.08 L493.43,155.46 L493.56,153.87 L493.62,152.35 L493.6,150.91 L493.48,149.57 L493.28,148.34 L493.02,147.16 L492.71,146.01 L492.37,144.9 L491.99,143.84 L491.56,142.81 L491.09,141.82 L490.58,140.89 L490.04,139.99 L489.45,139.15 L488.83,138.36 L488.18,137.61 L487.51,136.88 L486.81,136.17 L486.1,135.48 L485.37,134.82 L484.61,134.19 L483.84,133.58 L483.05,133.01 L482.24,132.46 L481.41,131.94 L480.57,131.46 L479.7,131.01 L478.83,130.58 L477.95,130.15 L477.06,129.73 L476.17,129.32 L475.26,128.93 L474.35,128.55 L473.43,128.2 L472.49,127.87 L471.55,127.58 L470.6,127.31 L469.64,127.08 L468.66,126.88 L467.68,126.73 L466.7,126.59 L465.71,126.46 L464.72,126.34 L463.73,126.23 L462.74,126.12 L461.75,126.02 L460.76,125.93 L459.76,125.85 L458.77,125.77 L457.78,125.7 L456.78,125.64 L455.78,125.58 L454.79,125.53 L453.79,125.49 L452.79,125.46 L451.79,125.43 L450.8,125.41 L449.8,125.4 L448.8,125.4 L447.8,125.4 L446.8,125.41 L445.81,125.43 L444.81,125.46 L443.81,125.49 L442.81,125.53 L441.82,125.58 L440.82,125.64 L439.82,125.7 L438.83,125.77 L437.84,125.85 L436.84,125.93 L435.85,126.02 L434.86,126.12 L433.87,126.23 L432.88,126.34 L431.89,126.46 L430.9,126.59 L429.92,126.73 L428.94,126.88 L427.96,127.08 L427,127.31 L426.05,127.58 L425.11,127.87 L424.17,128.2 L423.25,128.55 L422.34,128.93 L421.43,129.32 L420.54,129.73 L419.65,130.15 L418.77,130.58 L417.9,131.01 L417.03,131.46 L416.19,131.94 L415.36,132.46 L414.55,133.01 L413.76,133.58 L412.99,134.19 L412.23,134.82 L411.5,135.48 L410.79,136.17 L410.09,136.88 L409.42,137.61 L408.77,138.36 L408.15,139.15 L407.56,139.99 L407.02,140.89 L406.51,141.82 L406.04,142.81 L405.61,143.84 L405.23,144.9 L404.89,146.01 L404.58,147.16 L404.32,148.34 L404.12,149.57 L404,150.91 L403.98,152.35 L404.04,153.87 L404.17,155.46 L404.37,157.08 L404.62,158.74 L404.92,160.4 L405.24,162.06 L405.59,163.69 L405.98,165.33 L406.43,166.99 L406.92,168.67 L407.48,170.36 L408.09,172.07 L408.75,173.8 L409.47,175.54 L410.24,177.29 L411.08,179.06 L412,180.88 L413.01,182.74 L413.55,184.03 L411.95,183 L410.25,181.92 L408.46,180.79 L406.59,179.63 L404.62,178.43 L402.55,177.19 L400.32,175.83 L397.93,174.39 L395.43,172.92 L392.86,171.44 L390.27,170.01 L387.7,168.66 L385.21,167.44 L382.74,166.3 L380.13,165.1 L377.43,163.89 L374.72,162.71 L372.03,161.63 L369.44,160.67 L367.02,159.89 L364.83,159.34 L362.94,159.04 L361.41,159.05 L360.11,159.23 L358.84,159.45 L357.6,159.71 L356.4,160.01 L355.25,160.36 L354.17,160.76 L353.14,161.21 L352.19,161.71 L351.33,162.28 L350.55,162.9 L349.87,163.59 L349.33,164.35 L348.98,165.23 L348.82,166.2 L348.82,167.26 L348.99,168.4 L349.3,169.59 L349.75,170.84 L350.33,172.13 L351.01,173.46 L351.79,174.81 L352.83,176.25 L354.77,178.1 L357.48,180.25 L360.75,182.59 L364.36,185.01 L368.08,187.4 L371.69,189.67 L375,191.74 L378.2,193.71 L381.48,195.64 L385.04,197.61 L389.06,199.7 L393.79,201.96 L399.66,204.55 L406.39,207.33 L403.21,206.61 L393.85,203.88 L386,201.8 L379.86,200.39 L374.53,199.33 L369.79,198.52 L365.47,197.92 L361.39,197.45 L357.42,197.08 L353.56,196.79 L349.88,196.61 L346.41,196.54 L343.21,196.58 L340.34,196.75 L337.84,197.04 L335.48,197.4 L333.11,197.79 L330.78,198.23 L328.57,198.71 L326.52,199.26 L324.69,199.88 L323.14,200.57 L321.94,201.33 L321.13,202.18 L320.78,203.1 L320.83,204.08 L321.2,205.1 L321.85,206.15 L322.76,207.21 L323.88,208.28 L325.19,209.36 L326.65,210.42 L329.13,211.56 L332.9,212.76 L337.54,213.96 L342.6,215.13 L347.65,216.21 L352.81,217.23 L358.45,218.19 L364.5,219.09 L370.85,219.9 L375.74,220.58 L380.49,221.19 L389.61,221.76 L448.8,222.2" class="cv" stroke="#101080" stroke-width="0.8"/>
<path d="M283.64,221.6 L283.49,217.77 L283.03,213.95 L282.28,210.17 L281.23,206.45 L279.91,202.78 L278.32,199.2 L276.48,195.72 L274.41,192.34 L272.13,189.07 L269.66,185.92 L267,182.9 L264.19,180.01 L261.23,177.26 L258.14,174.66 L254.93,172.2 L251.61,169.88 L248.19,167.73 L244.68,165.73 L241.08,163.9 L237.4,162.25 L233.64,160.77 L229.81,159.49 L225.92,158.4 L221.98,157.53 L217.99,156.87 L213.97,156.43 L209.94,156.22 L205.9,156.24 L201.88,156.49 L197.9,156.96 L193.98,157.65 L190.15,158.54 L186.41,159.62 L182.8,160.86 L179.34,162.23 L176.03,163.71 L172.89,165.26 L169.93,166.86 L167.15,168.46 L164.54,170.04 L162.11,171.55 L159.84,172.97 L157.71,174.25 L155.71,175.38 L153.8,176.31 L151.89,175.38 L149.89,174.25 L147.76,172.97 L145.49,171.55 L143.06,170.04 L140.45,168.46 L137.67,166.86 L134.71,165.26 L131.57,163.71 L128.26,162.23 L124.8,160.86 L121.19,159.62 L117.45,158.54 L113.62,157.65 L109.7,156.96 L105.72,156.49 L101.7,156.24 L97.66,156.22 L93.63,156.43 L89.61,156.87 L85.62,157.53 L81.68,158.4 L77.79,159.49 L73.96,160.77 L70.2,162.25 L66.52,163.9 L62.92,165.73 L59.41,167.73 L55.99,169.88 L52.67,172.2 L49.46,174.66 L46.37,177.26 L43.41,180.01 L40.6,182.9 L37.94,185.92 L35.47,189.07 L33.19,192.34 L31.12,195.72 L29.28,199.2 L27.69,202.78 L26.37,206.45 L25.32,210.17 L24.57,213.95 L24.11,217.77 L23.96,221.6 L24.11,225.43 L24.57,229.25 L25.32,233.03 L26.37,236.75 L27.69,240.42 L29.28,244 L31.12,247.48 L33.19,250.86 L35.47,254.13 L37.94,257.28 L40.6,260.3 L43.41,263.19 L46.37,265.94 L49.46,268.54 L52.67,271 L55.99,273.32 L59.41,275.47 L62.92,277.47 L66.52,279.3 L70.2,280.95 L73.96,282.43 L77.79,283.71 L81.68,284.8 L85.62,285.67 L89.61,286.33 L93.63,286.77 L97.66,286.98 L101.7,286.96 L105.72,286.71 L109.7,286.24 L113.62,285.55 L117.45,284.66 L121.19,283.58 L124.8,282.34 L128.26,280.97 L131.57,279.49 L134.71,277.94 L137.67,276.34 L140.45,274.74 L143.06,273.16 L145.49,271.65 L147.76,270.23 L149.89,268.95 L151.89,267.82 L153.8,266.89 L155.71,267.82 L157.71,268.95 L159.84,270.23 L162.11,271.65 L164.54,273.16 L167.15,274.74 L169.93,276.34 L172.89,277.94 L176.03,279.49 L179.34,280.97 L182.8,282.34 L186.41,283.58 L190.15,284.66 L193.98,285.55 L197.9,286.24 L201.88,286.71 L205.9,286.96 L209.94,286.98 L213.97,286.77 L217.99,286.33 L221.98,285.67 L225.92,284.8 L229.81,283.71 L233.64,282.43 L237.4,280.95 L241.08,279.3 L244.68,277.47 L248.19,275.47 L251.61,273.32 L254.93,271 L258.14,268.54 L261.23,265.94 L264.19,263.19 L267,260.3 L269.66,257.28 L272.13,254.13 L274.41,250.86 L276.48,247.48 L278.32,244 L279.91,240.42 L281.23,236.75 L282.28,233.03 L283.03,229.25 L283.49,225.43 L283.64,221.6Z" class="cv" stroke="#909020" stroke-width="0.8"/>
<path d="M448.8,222.2 L508.04,221.76 L517.16,221.19 L521.91,220.58 L526.86,219.89 L533.23,219.08 L539.29,218.19 L544.95,217.22 L550.11,216.21 L555.18,215.12 L560.26,213.95 L564.89,212.74 L568.63,211.54 L571.04,210.42 L572.49,209.35 L573.8,208.28 L574.92,207.2 L575.81,206.14 L576.45,205.09 L576.8,204.08 L576.82,203.1 L576.44,202.18 L575.59,201.35 L574.35,200.59 L572.77,199.9 L570.91,199.29 L568.83,198.75 L566.6,198.27 L564.26,197.84 L561.88,197.46 L559.51,197.1 L556.96,196.82 L554.03,196.67 L550.78,196.64 L547.27,196.73 L543.54,196.92 L539.65,197.22 L535.65,197.61 L531.53,198.1 L527.14,198.72 L522.3,199.56 L516.83,200.68 L510.46,202.17 L502.26,204.38 L492.67,207.2 L492.5,206.88 L499.13,204.12 L504.82,201.59 L509.4,199.37 L513.34,197.31 L516.84,195.35 L520.11,193.42 L523.34,191.44 L526.73,189.32 L530.4,187.02 L534.14,184.61 L537.71,182.2 L540.89,179.89 L543.47,177.8 L545.21,176.05 L546.13,174.65 L546.89,173.31 L547.55,171.99 L548.11,170.71 L548.53,169.47 L548.81,168.29 L548.94,167.17 L548.91,166.13 L548.7,165.18 L548.3,164.33 L547.72,163.59 L547.01,162.92 L546.21,162.31 L545.32,161.77 L544.35,161.28 L543.31,160.84 L542.2,160.46 L541.03,160.12 L539.82,159.83 L538.57,159.59 L537.28,159.38 L535.95,159.22 L534.29,159.32 L532.29,159.7 L530,160.33 L527.51,161.18 L524.87,162.18 L522.15,163.3 L519.42,164.49 L516.74,165.71 L514.16,166.89 L511.7,168.04 L509.16,169.31 L506.57,170.69 L503.96,172.14 L501.4,173.63 L498.92,175.1 L496.58,176.51 L494.4,177.81 L492.37,179.04 L490.43,180.22 L488.58,181.37 L486.82,182.48 L485.15,183.54 L484.14,183.93 L485.19,182.07 L486.18,180.22 L487.09,178.42 L487.9,176.66 L488.67,174.91 L489.37,173.17 L490.02,171.45 L490.62,169.74 L491.16,168.05 L491.65,166.37 L492.08,164.72 L492.45,163.09 L492.81,161.44 L493.13,159.77 L493.42,158.1 L493.66,156.46 L493.83,154.85 L493.93,153.3 L493.96,151.83 L493.9,150.43 L493.74,149.15 L493.51,147.95 L493.24,146.79 L492.92,145.66 L492.56,144.57 L492.16,143.52 L491.72,142.52 L491.23,141.55 L490.71,140.64 L490.15,139.77 L489.55,138.95 L488.92,138.18 L488.26,137.44 L487.58,136.71 L486.88,136.01 L486.16,135.34 L485.42,134.69 L484.67,134.06 L483.89,133.47 L483.09,132.9 L482.27,132.36 L481.44,131.86 L480.59,131.39 L479.72,130.94 L478.85,130.51 L477.97,130.08 L477.08,129.67 L476.19,129.26 L475.28,128.87 L474.36,128.51 L473.44,128.16 L472.5,127.84 L471.56,127.55 L470.6,127.29 L469.64,127.06 L468.66,126.88 L467.68,126.73 L466.7,126.59 L465.71,126.46 L464.72,126.34 L463.73,126.23 L462.74,126.12 L461.75,126.02 L460.76,125.93 L459.76,125.85 L458.77,125.77 L457.78,125.7 L456.78,125.64 L455.78,125.58 L454.79,125.53 L453.79,125.49 L452.79,125.46 L451.79,125.43 L450.8,125.41 L449.8,125.4 L448.8,125.4 L447.8,125.4 L446.8,125.41 L445.81,125.43 L444.81,125.46 L443.81,125.49 L442.81,125.53 L441.82,125.58 L440.82,125.64 L439.82,125.7 L438.83,125.77 L437.84,125.85 L436.84,125.93 L435.85,126.02 L434.86,126.12 L433.87,126.23 L432.88,126.34 L431.89,126.46 L430.9,126.59 L429.92,126.73 L428.94,126.88 L427.96,127.06 L427,127.29 L426.04,127.55 L425.1,127.84 L424.16,128.16 L423.24,128.51 L422.32,128.87 L421.41,129.26 L420.52,129.67 L419.63,130.08 L418.75,130.51 L417.88,130.94 L417.01,131.39 L416.16,131.86 L415.33,132.36 L414.51,132.9 L413.71,133.47 L412.93,134.06 L412.18,134.69 L411.44,135.34 L410.72,136.01 L410.02,136.71 L409.34,137.44 L408.68,138.18 L408.05,138.95 L407.45,139.77 L406.89,140.64 L406.37,141.55 L405.88,142.52 L405.44,143.52 L405.04,144.57 L404.68,145.66 L404.36,146.79 L404.09,147.95 L403.86,149.15 L403.7,150.43 L403.64,151.83 L403.67,153.3 L403.77,154.85 L403.94,156.46 L404.18,158.1 L404.47,159.77 L404.79,161.44 L405.15,163.09 L405.52,164.72 L405.95,166.37 L406.44,168.05 L406.98,169.74 L407.58,171.45 L408.23,173.17 L408.93,174.91 L409.7,176.66 L410.51,178.42 L411.42,180.22 L412.41,182.07 L413.46,183.93 L412.45,183.54 L410.78,182.48 L409.02,181.37 L407.17,180.22 L405.23,179.04 L403.2,177.81 L401.02,176.51 L398.68,175.1 L396.2,173.63 L393.64,172.14 L391.03,170.69 L388.44,169.31 L385.9,168.04 L383.44,166.89 L380.86,165.71 L378.18,164.49 L375.45,163.3 L372.73,162.18 L370.09,161.18 L367.6,160.33 L365.31,159.7 L363.31,159.32 L361.65,159.22 L360.32,159.38 L359.03,159.59 L357.78,159.83 L356.57,160.12 L355.4,160.46 L354.29,160.84 L353.25,161.28 L352.28,161.77 L351.39,162.31 L350.59,162.92 L349.88,163.59 L349.3,164.33 L348.9,165.18 L348.69,166.13 L348.66,167.17 L348.79,168.29 L349.07,169.47 L349.49,170.71 L350.05,171.99 L350.71,173.31 L351.47,174.65 L352.39,176.05 L354.13,177.8 L356.71,179.89 L359.89,182.2 L363.46,184.61 L367.2,187.02 L370.87,189.32 L374.26,191.44 L377.49,193.42 L380.76,195.35 L384.26,197.31 L388.2,199.37 L392.78,201.59 L398.47,204.12 L405.1,206.88 L404.93,207.2 L395.34,204.38 L387.14,202.17 L380.77,200.68 L375.3,199.56 L370.46,198.72 L366.07,198.1 L361.95,197.61 L357.95,197.22 L354.06,196.92 L350.33,196.73 L346.82,196.64 L343.57,196.67 L340.64,196.82 L338.09,197.1 L335.72,197.46 L333.34,197.84 L331,198.27 L328.77,198.75 L326.69,199.29 L324.83,199.9 L323.25,200.59 L322.01,201.35 L321.16,202.18 L320.78,203.1 L320.8,204.08 L321.15,205.09 L321.79,206.14 L322.68,207.2 L323.8,208.28 L325.11,209.35 L326.56,210.42 L328.97,211.54 L332.71,212.74 L337.34,213.95 L342.42,215.12 L347.49,216.21 L352.65,217.22 L358.31,218.19 L364.37,219.08 L370.74,219.89 L375.69,220.58 L380.44,221.19 L389.56,221.76 L448.8,222.2" class="cv" stroke="#909020" stroke-width="0.8"/>
<path d="M283.49,221.6 L283.33,217.77 L282.88,213.96 L282.12,210.19 L281.07,206.47 L279.73,202.81 L278.14,199.24 L276.3,195.76 L274.22,192.38 L271.93,189.12 L269.45,185.98 L266.78,182.97 L263.96,180.1 L261,177.36 L257.9,174.77 L254.68,172.32 L251.36,170.02 L247.93,167.88 L244.41,165.89 L240.81,164.08 L237.12,162.44 L233.36,160.98 L229.54,159.71 L225.65,158.65 L221.7,157.79 L217.72,157.15 L213.7,156.73 L209.67,156.54 L205.63,156.58 L201.62,156.84 L197.65,157.34 L193.74,158.05 L189.91,158.95 L186.19,160.05 L182.59,161.3 L179.14,162.69 L175.85,164.18 L172.73,165.75 L169.78,167.36 L167.02,168.97 L164.44,170.55 L162.03,172.07 L159.78,173.49 L157.67,174.78 L155.69,175.9 L153.8,176.83 L151.91,175.9 L149.93,174.78 L147.82,173.49 L145.57,172.07 L143.16,170.55 L140.58,168.97 L137.82,167.36 L134.87,165.75 L131.75,164.18 L128.46,162.69 L125.01,161.3 L121.41,160.05 L117.69,158.95 L113.86,158.05 L109.95,157.34 L105.98,156.84 L101.97,156.58 L97.93,156.54 L93.9,156.73 L89.88,157.15 L85.9,157.79 L81.95,158.65 L78.06,159.71 L74.24,160.98 L70.48,162.44 L66.79,164.08 L63.19,165.89 L59.67,167.88 L56.24,170.02 L52.92,172.32 L49.7,174.77 L46.6,177.36 L43.64,180.1 L40.82,182.97 L38.15,185.98 L35.67,189.12 L33.38,192.38 L31.3,195.76 L29.46,199.24 L27.87,202.81 L26.53,206.47 L25.48,210.19 L24.72,213.96 L24.27,217.77 L24.11,221.6 L24.27,225.43 L24.72,229.24 L25.48,233.01 L26.53,236.73 L27.87,240.39 L29.46,243.96 L31.3,247.44 L33.38,250.82 L35.67,254.08 L38.15,257.22 L40.82,260.23 L43.64,263.1 L46.6,265.84 L49.7,268.43 L52.92,270.88 L56.24,273.18 L59.67,275.32 L63.19,277.31 L66.79,279.12 L70.48,280.76 L74.24,282.22 L78.06,283.49 L81.95,284.55 L85.9,285.41 L89.88,286.05 L93.9,286.47 L97.93,286.66 L101.97,286.62 L105.98,286.36 L109.95,285.86 L113.86,285.15 L117.69,284.25 L121.41,283.15 L125.01,281.9 L128.46,280.51 L131.75,279.02 L134.87,277.45 L137.82,275.84 L140.58,274.23 L143.16,272.65 L145.57,271.13 L147.82,269.71 L149.93,268.42 L151.91,267.3 L153.8,266.37 L155.69,267.3 L157.67,268.42 L159.78,269.71 L162.03,271.13 L164.44,272.65 L167.02,274.23 L169.78,275.84 L172.73,277.45 L175.85,279.02 L179.14,280.51 L182.59,281.9 L186.19,283.15 L189.91,284.25 L193.74,285.15 L197.65,285.86 L201.62,286.36 L205.63,286.62 L209.67,286.66 L213.7,286.47 L217.72,286.05 L221.7,285.41 L225.65,284.55 L229.54,283.49 L233.36,282.22 L237.12,280.76 L240.81,279.12 L244.41,277.31 L247.93,275.32 L251.36,273.18 L254.68,270.88 L257.9,268.43 L261,265.84 L263.96,263.1 L266.78,260.23 L269.45,257.22 L271.93,254.08 L274.22,250.82 L276.3,247.44 L278.14,243.96 L279.73,240.39 L281.07,236.73 L282.12,233.01 L282.88,229.24 L283.33,225.43 L283.49,221.6Z" class="cv" stroke="#d030c8" stroke-width="1.15"/>
<path d="M448.8,222.2 L508.09,221.76 L517.21,221.19 L521.96,220.58 L526.96,219.89 L533.35,219.08 L539.43,218.18 L545.1,217.22 L550.27,216.2 L555.37,215.1 L560.46,213.93 L565.08,212.73 L568.78,211.53 L571.13,210.41 L572.58,209.34 L573.88,208.27 L574.99,207.19 L575.88,206.13 L576.5,205.09 L576.83,204.07 L576.82,203.1 L576.4,202.19 L575.52,201.36 L574.24,200.61 L572.62,199.93 L570.74,199.33 L568.63,198.79 L566.37,198.32 L564.02,197.89 L561.63,197.51 L559.26,197.16 L556.65,196.89 L553.67,196.76 L550.37,196.74 L546.81,196.84 L543.04,197.06 L539.12,197.37 L535.09,197.77 L530.93,198.27 L526.46,198.93 L521.51,199.81 L515.9,200.97 L509.25,202.57 L500.73,204.89 L490.93,207.8 L493.77,206.44 L500.29,203.7 L505.79,201.23 L510.24,199.05 L514.1,197.02 L517.56,195.07 L520.83,193.13 L524.08,191.13 L527.56,188.97 L531.28,186.64 L535.03,184.22 L538.56,181.82 L541.64,179.55 L544.06,177.52 L545.59,175.87 L546.43,174.5 L547.18,173.16 L547.83,171.85 L548.36,170.58 L548.76,169.35 L549.01,168.18 L549.1,167.08 L549.03,166.07 L548.77,165.14 L548.32,164.32 L547.7,163.6 L546.97,162.95 L546.14,162.36 L545.23,161.83 L544.23,161.35 L543.17,160.93 L542.04,160.56 L540.86,160.24 L539.64,159.96 L538.37,159.72 L537.07,159.53 L535.67,159.42 L533.88,159.62 L531.77,160.09 L529.4,160.79 L526.84,161.69 L524.15,162.74 L521.41,163.89 L518.68,165.1 L516.02,166.31 L513.48,167.47 L510.99,168.65 L508.41,169.97 L505.8,171.38 L503.19,172.85 L500.64,174.33 L498.19,175.78 L495.89,177.16 L493.77,178.43 L491.76,179.63 L489.85,180.81 L488.02,181.94 L486.29,183.03 L484.65,184.07 L484.75,183.27 L485.79,181.41 L486.76,179.57 L487.64,177.79 L488.44,176.03 L489.2,174.28 L489.89,172.55 L490.53,170.82 L491.11,169.12 L491.64,167.43 L492.11,165.76 L492.53,164.12 L492.9,162.48 L493.26,160.81 L493.58,159.14 L493.86,157.48 L494.08,155.84 L494.22,154.27 L494.29,152.75 L494.28,151.32 L494.18,149.98 L493.99,148.74 L493.74,147.57 L493.45,146.42 L493.12,145.32 L492.74,144.25 L492.33,143.22 L491.87,142.23 L491.37,141.29 L490.84,140.4 L490.26,139.55 L489.65,138.75 L489.01,138 L488.34,137.26 L487.66,136.55 L486.95,135.86 L486.23,135.19 L485.48,134.55 L484.72,133.94 L483.93,133.36 L483.13,132.8 L482.31,132.27 L481.47,131.78 L480.62,131.32 L479.75,130.88 L478.87,130.45 L477.99,130.02 L477.1,129.61 L476.2,129.21 L475.29,128.82 L474.38,128.46 L473.45,128.12 L472.51,127.81 L471.56,127.52 L470.61,127.27 L469.64,127.05 L468.66,126.87 L467.68,126.73 L466.7,126.59 L465.71,126.46 L464.72,126.34 L463.73,126.23 L462.74,126.12 L461.75,126.02 L460.76,125.93 L459.76,125.85 L458.77,125.77 L457.78,125.7 L456.78,125.64 L455.78,125.58 L454.79,125.53 L453.79,125.49 L452.79,125.46 L451.79,125.43 L450.8,125.41 L449.8,125.4 L448.8,125.4 L447.8,125.4 L446.8,125.41 L445.81,125.43 L444.81,125.46 L443.81,125.49 L442.81,125.53 L441.82,125.58 L440.82,125.64 L439.82,125.7 L438.83,125.77 L437.84,125.85 L436.84,125.93 L435.85,126.02 L434.86,126.12 L433.87,126.23 L432.88,126.34 L431.89,126.46 L430.9,126.59 L429.92,126.73 L428.94,126.87 L427.96,127.05 L426.99,127.27 L426.04,127.52 L425.09,127.81 L424.15,128.12 L423.22,128.46 L422.31,128.82 L421.4,129.21 L420.5,129.61 L419.61,130.02 L418.73,130.45 L417.85,130.88 L416.98,131.32 L416.13,131.78 L415.29,132.27 L414.47,132.8 L413.67,133.36 L412.88,133.94 L412.12,134.55 L411.37,135.19 L410.65,135.86 L409.94,136.55 L409.26,137.26 L408.59,138 L407.95,138.75 L407.34,139.55 L406.76,140.4 L406.23,141.29 L405.73,142.23 L405.27,143.22 L404.86,144.25 L404.48,145.32 L404.15,146.42 L403.86,147.57 L403.61,148.74 L403.42,149.98 L403.32,151.32 L403.31,152.75 L403.38,154.27 L403.52,155.84 L403.74,157.48 L404.02,159.14 L404.34,160.81 L404.7,162.48 L405.07,164.12 L405.49,165.76 L405.96,167.43 L406.49,169.12 L407.07,170.82 L407.71,172.55 L408.4,174.28 L409.16,176.03 L409.96,177.79 L410.84,179.57 L411.81,181.41 L412.85,183.27 L412.95,184.07 L411.31,183.03 L409.58,181.94 L407.75,180.81 L405.84,179.63 L403.83,178.43 L401.71,177.16 L399.41,175.78 L396.96,174.33 L394.41,172.85 L391.8,171.38 L389.19,169.97 L386.61,168.65 L384.12,167.47 L381.58,166.31 L378.92,165.1 L376.19,163.89 L373.45,162.74 L370.76,161.69 L368.2,160.79 L365.83,160.09 L363.72,159.62 L361.93,159.42 L360.53,159.53 L359.23,159.72 L357.96,159.96 L356.74,160.24 L355.56,160.56 L354.43,160.93 L353.37,161.35 L352.37,161.83 L351.46,162.36 L350.63,162.95 L349.9,163.6 L349.28,164.32 L348.83,165.14 L348.57,166.07 L348.5,167.08 L348.59,168.18 L348.84,169.35 L349.24,170.58 L349.77,171.85 L350.42,173.16 L351.17,174.5 L352.01,175.87 L353.54,177.52 L355.96,179.55 L359.04,181.82 L362.57,184.22 L366.32,186.64 L370.04,188.97 L373.52,191.13 L376.77,193.13 L380.04,195.07 L383.5,197.02 L387.36,199.05 L391.81,201.23 L397.31,203.7 L403.83,206.44 L406.67,207.8 L396.87,204.89 L388.35,202.57 L381.7,200.97 L376.09,199.81 L371.14,198.93 L366.67,198.27 L362.51,197.77 L358.48,197.37 L354.56,197.06 L350.79,196.84 L347.23,196.74 L343.93,196.76 L340.95,196.89 L338.34,197.16 L335.97,197.51 L333.58,197.89 L331.23,198.32 L328.97,198.79 L326.86,199.33 L324.98,199.93 L323.36,200.61 L322.08,201.36 L321.2,202.19 L320.78,203.1 L320.77,204.07 L321.1,205.09 L321.72,206.13 L322.61,207.19 L323.72,208.27 L325.02,209.34 L326.47,210.41 L328.82,211.53 L332.52,212.73 L337.14,213.93 L342.23,215.1 L347.33,216.2 L352.5,217.22 L358.17,218.18 L364.25,219.08 L370.64,219.89 L375.64,220.58 L380.39,221.19 L389.51,221.76 L448.8,222.2" class="cv" stroke="#d030c8" stroke-width="1.15"/>
<text transform="translate(154.3,109) scale(1.12,1)" text-anchor="middle">Y</text>
<path d="M153,118.5h3M153,125.5h3" stroke="#222" stroke-width="1" shape-rendering="crispEdges"/>
<text transform="translate(154.8,143.5) scale(1.12,1)" text-anchor="middle">-3</text>
<text transform="translate(154.8,173.5) scale(1.12,1)" text-anchor="middle">-10</text>
<text transform="translate(154.8,201) scale(1.12,1)" text-anchor="middle">-20</text>
<text transform="translate(154.8,215) scale(1.12,1)" text-anchor="middle">-30</text>
<text transform="translate(290,226) scale(1.12,1)" text-anchor="middle">X</text>
<text transform="translate(449.3,108) scale(1.12,1)" text-anchor="middle">Z</text>
<text transform="translate(448.8,126) scale(1.12,1)" text-anchor="middle">0</text>
<text transform="translate(448.8,143.2) scale(1.12,1)" text-anchor="middle">-3</text>
<text transform="translate(448.8,173.5) scale(1.12,1)" text-anchor="middle">-10</text>
<text transform="translate(448.8,201) scale(1.12,1)" text-anchor="middle">-20</text>
<text transform="translate(448.8,215) scale(1.12,1)" text-anchor="middle">-30</text>
<text transform="translate(583,226) scale(1.12,1)" text-anchor="middle">X</text>
<text x="317.8" y="242.3" style="font-size:11.8px">7.4(dBi) = 0dB</text>
</svg><div class="abs" style="left:271px;top:294px;width:274px;height:1px;background:#404040"></div>
<div class="th" style="left:272px;top:294.5px;width:49.5px;height:17px">Freq</div>
<div class="th" style="left:322.5px;top:294.5px;width:45px;height:17px">R</div>
<div class="th" style="left:368.5px;top:294.5px;width:49.5px;height:17px">jX</div>
<div class="th" style="left:419px;top:294.5px;width:44.5px;height:17px">Ga</div>
<div class="th" style="left:464.5px;top:294.5px;width:42.5px;height:17px">F/B</div>
<div class="th" style="left:508px;top:294.5px;width:36px;height:17px">ON</div>
<div class="td" style="left:272px;top:311.5px;width:49.5px;height:16.2px;line-height:18.2px;color:#1a1a1a;background:#0a246a;color:#223;">50.1</div>
<div class="td" style="left:322.5px;top:311.5px;width:45px;height:16.2px;line-height:18.2px;color:#1a1a1a;">52.0</div>
<div class="td" style="left:368.5px;top:311.5px;width:49.5px;height:16.2px;line-height:18.2px;color:#1a1a1a;">-14.9</div>
<div class="td" style="left:419px;top:311.5px;width:44.5px;height:16.2px;line-height:18.2px;color:#1a1a1a;">7.4</div>
<div class="td" style="left:464.5px;top:311.5px;width:42.5px;height:16.2px;line-height:18.2px;color:#1a1a1a;">0.0</div>
<div class="td" style="left:508px;top:311.5px;width:36px;height:16.2px;line-height:18.2px;color:#1a1a1a;">On</div>
<div class="td" style="left:272px;top:328.7px;width:49.5px;height:16.3px;line-height:18.3px;color:#b83a3a;">50.3</div>
<div class="td" style="left:322.5px;top:328.7px;width:45px;height:16.3px;line-height:18.3px;color:#b83a3a;">53.0</div>
<div class="td" style="left:368.5px;top:328.7px;width:49.5px;height:16.3px;line-height:18.3px;color:#b83a3a;">-9.9</div>
<div class="td" style="left:419px;top:328.7px;width:44.5px;height:16.3px;line-height:18.3px;color:#b83a3a;">7.4</div>
<div class="td" style="left:464.5px;top:328.7px;width:42.5px;height:16.3px;line-height:18.3px;color:#b83a3a;">0.0</div>
<div class="td" style="left:508px;top:328.7px;width:36px;height:16.3px;line-height:18.3px;color:#b83a3a;">On</div>
<div class="td" style="left:272px;top:346px;width:49.5px;height:16px;line-height:18px;color:#2a2a8c;">50.5</div>
<div class="td" style="left:322.5px;top:346px;width:45px;height:16px;line-height:18px;color:#2a2a8c;">54.1</div>
<div class="td" style="left:368.5px;top:346px;width:49.5px;height:16px;line-height:18px;color:#2a2a8c;">-4.6</div>
<div class="td" style="left:419px;top:346px;width:44.5px;height:16px;line-height:18px;color:#2a2a8c;">7.4</div>
<div class="td" style="left:464.5px;top:346px;width:42.5px;height:16px;line-height:18px;color:#2a2a8c;">0.0</div>
<div class="td" style="left:508px;top:346px;width:36px;height:16px;line-height:18px;color:#2a2a8c;">On</div>
<div class="td" style="left:272px;top:363px;width:49.5px;height:16px;line-height:18px;color:#9c9c3c;">50.7</div>
<div class="td" style="left:322.5px;top:363px;width:45px;height:16px;line-height:18px;color:#9c9c3c;">55.2</div>
<div class="td" style="left:368.5px;top:363px;width:49.5px;height:16px;line-height:18px;color:#9c9c3c;">0.8</div>
<div class="td" style="left:419px;top:363px;width:44.5px;height:16px;line-height:18px;color:#9c9c3c;">7.3</div>
<div class="td" style="left:464.5px;top:363px;width:42.5px;height:16px;line-height:18px;color:#9c9c3c;">0.0</div>
<div class="td" style="left:508px;top:363px;width:36px;height:16px;line-height:18px;color:#9c9c3c;">On</div>
<div class="td" style="left:272px;top:380px;width:49.5px;height:16px;line-height:18px;color:#d848d8;">50.9</div>
<div class="td" style="left:322.5px;top:380px;width:45px;height:16px;line-height:18px;color:#d848d8;">56.2</div>
<div class="td" style="left:368.5px;top:380px;width:49.5px;height:16px;line-height:18px;color:#d848d8;">5.6</div>
<div class="td" style="left:419px;top:380px;width:44.5px;height:16px;line-height:18px;color:#d848d8;">7.3</div>
<div class="td" style="left:464.5px;top:380px;width:42.5px;height:16px;line-height:18px;color:#d848d8;">0.0</div>
<div class="td" style="left:508px;top:380px;width:36px;height:16px;line-height:18px;color:#d848d8;">On</div>
<div class="btn" style="left:507.5px;top:265.5px;width:80px;height:22.5px;line-height:20px;font-size:12px;text-indent:-3px">Colours</div>

<div class="abs" style="left:8px;top:377px;width:249px;height:37.5px;box-sizing:border-box;border:1px solid #808080;box-shadow:1px 1px 0 #fff, inset 1px 1px 0 #fff"></div>
<div class="lbl" style="left:12px;top:370.5px;background:#d4d0c8;padding:0 1px;font-size:13px">Field(s)</div>
<div class="radio" style="left:14px;top:394px"></div><div class="lbl" style="left:29.5px;top:392.5px">V</div>
<div class="radio" style="left:75px;top:394px"></div><div class="lbl" style="left:89px;top:392.5px">H</div>
<div class="radio on" style="left:134px;top:394px"></div><div class="lbl" style="left:150px;top:392.5px">Total</div>
<div class="abs" style="left:148px;top:388px;width:30px;height:21px;border:1px dotted #333;box-sizing:border-box;border-right:none;border-bottom:none"></div>
<div class="radio" style="left:195px;top:394px"></div><div class="lbl" style="left:210px;top:392.5px">V+H</div>
</body></html>
